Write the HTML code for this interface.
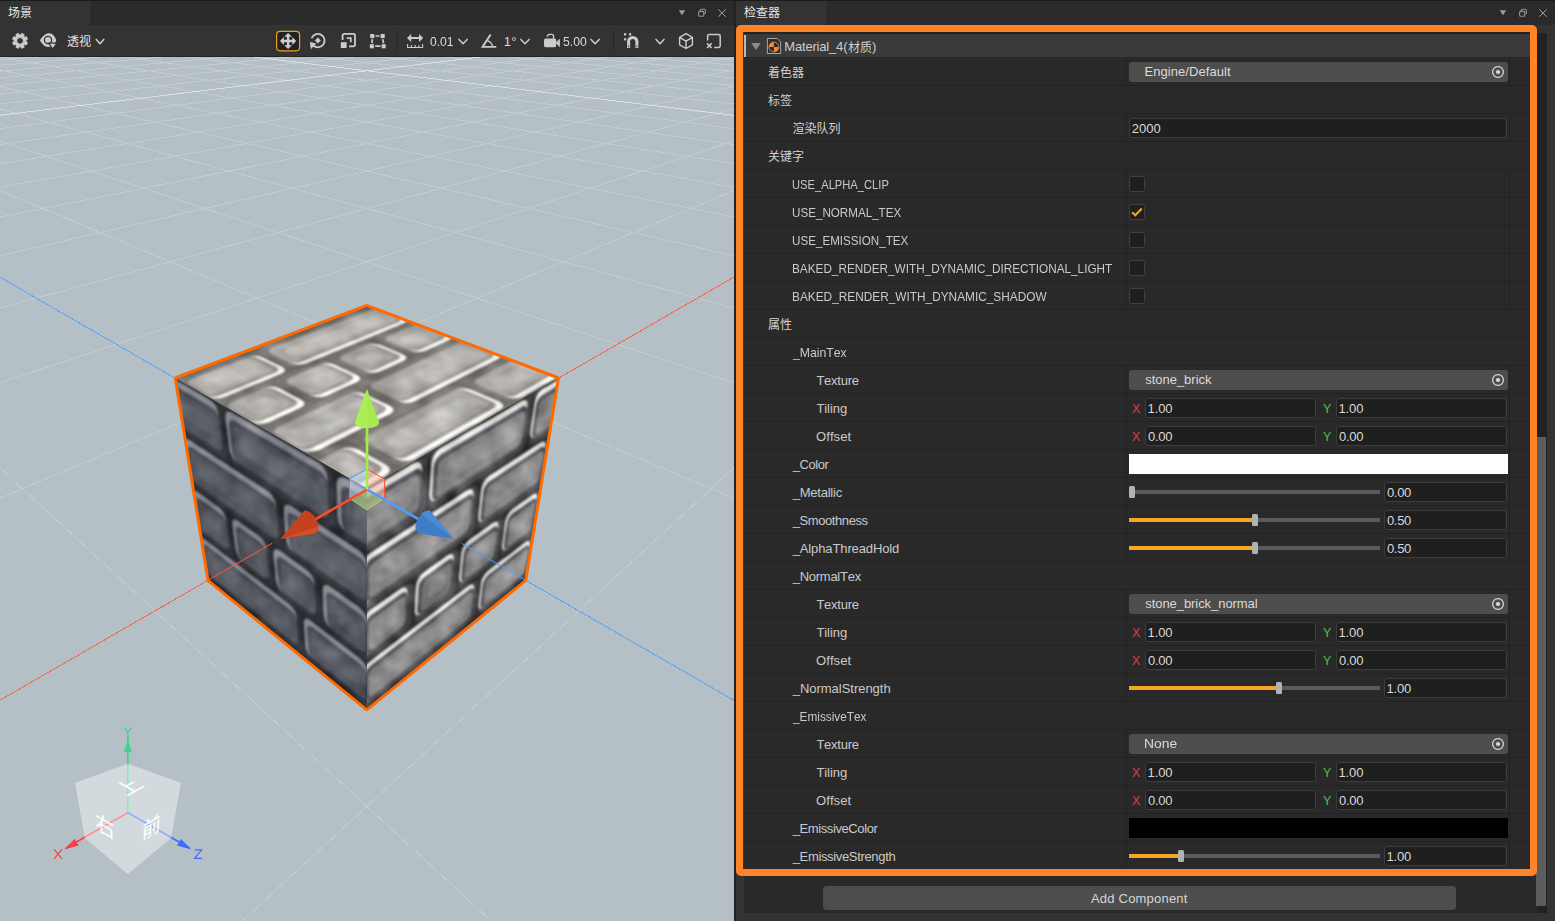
<!DOCTYPE html><html><head><meta charset="utf-8"><style>
html,body{margin:0;padding:0}
body{width:1555px;height:921px;overflow:hidden;position:relative;background:#333333;font-family:"Liberation Sans",sans-serif;font-kerning:none}
div{position:absolute;box-sizing:border-box}
.t{white-space:nowrap;font-size:13px}
.sep{left:744px;width:786px;height:1.3px;background:#222222}
.vs{width:1.3px;background:#222222}
.btn{background:#4d4d4d;border-radius:3px;height:20.5px}
.inp{background:#1f1f1f;border:1px solid #3d3d3d;border-radius:3px;height:19.5px}
.trk{height:3.4px;background:#5a5a5a;left:1129px;width:250.5px}
.fil{height:3.4px;background:#f5a623;left:1129px}
.thm{width:6px;height:11.4px;background:#b2b2b2;border-radius:1.5px}
.cb{left:1129.1px;width:15.9px;height:15.9px;background:#1f1f1f;border:1.1px solid #414141;border-radius:2.6px}
</style></head><body>
<div style="left:0;top:0;width:1555px;height:1px;background:#1a1a1a"></div>
<div style="left:0;top:1px;width:734px;height:23.6px;background:#2a2a2a"></div>
<div style="left:0;top:1px;width:90px;height:23.6px;background:#333"></div>
<div style="left:736px;top:1px;width:819px;height:23.6px;background:#2a2a2a"></div>
<div style="left:736px;top:1px;width:90px;height:23.6px;background:#333"></div>
<div style="left:734px;top:1px;width:2px;height:920px;background:#222"></div>
<div style="left:0;top:56px;width:734px;height:1px;background:#242424"></div>
<svg width="734" height="864" viewBox="0 57 734 864" style="position:absolute;left:0;top:57px;display:block">
<defs>
<filter id="soft" x="-5%" y="-5%" width="110%" height="110%"><feGaussianBlur stdDeviation="0.9"/></filter>
<filter id="stoneT" x="0" y="0" width="100%" height="100%" color-interpolation-filters="sRGB"><feGaussianBlur in="SourceGraphic" stdDeviation="1.25" result="b"/><feTurbulence type="fractalNoise" baseFrequency="0.035 0.06" numOctaves="2" seed="4" result="n"/><feColorMatrix in="n" type="matrix" values="0.6 0.6 0 0 0  0.6 0.6 0 0 0  0.6 0.6 0 0 0  0 0 0 0 1" result="ng"/><feComposite in="b" in2="ng" operator="arithmetic" k1="0" k2="1" k3="0.34" k4="-0.204"/></filter>
<filter id="stoneR" x="0" y="0" width="100%" height="100%" color-interpolation-filters="sRGB"><feGaussianBlur in="SourceGraphic" stdDeviation="1.15" result="b"/><feTurbulence type="fractalNoise" baseFrequency="0.05 0.05" numOctaves="2" seed="9" result="n"/><feColorMatrix in="n" type="matrix" values="0.6 0.6 0 0 0  0.6 0.6 0 0 0  0.6 0.6 0 0 0  0 0 0 0 1" result="ng"/><feComposite in="b" in2="ng" operator="arithmetic" k1="0" k2="1" k3="0.34" k4="-0.204"/></filter>
<filter id="stoneL" x="0" y="0" width="100%" height="100%" color-interpolation-filters="sRGB"><feGaussianBlur in="SourceGraphic" stdDeviation="1.3" result="b"/><feTurbulence type="fractalNoise" baseFrequency="0.05 0.05" numOctaves="2" seed="14" result="n"/><feColorMatrix in="n" type="matrix" values="0.6 0.6 0 0 0  0.6 0.6 0 0 0  0.6 0.6 0 0 0  0 0 0 0 1" result="ng"/><feComposite in="b" in2="ng" operator="arithmetic" k1="0" k2="1" k3="0.2" k4="-0.12"/></filter>
<linearGradient id="bgg" x1="0" y1="0" x2="0" y2="1"><stop offset="0" stop-color="#bfcad1"/><stop offset="0.06" stop-color="#b6c1c8"/><stop offset="1" stop-color="#b3bec5"/></linearGradient>
</defs>
<rect x="0" y="57" width="734" height="864" fill="#b4bfc6"/>
<path d="M359.5,-17.9L25585.4,610.9M374.2,-17.9L-24851.7,610.9M352.0,-17.7L32876.8,806.3M381.7,-17.7L-32143.1,806.3M344.3,-17.6L46419.5,1169.4M389.4,-17.6L-45685.8,1169.4M336.6,-17.4L80285.2,2077.4M397.1,-17.4L-79551.5,2077.4M328.7,-17.2L317701.5,8442.5M405.0,-17.2L-316967.8,8442.5M320.7,-17.0L400285.2,10832.3M413.0,-17.0L-399551.5,10832.3M312.5,-16.8L393211.6,10832.3M421.2,-16.8L-392477.9,10832.3M304.2,-16.6L386137.9,10832.3M429.4,-16.6L-385404.3,10832.3M295.8,-16.4L379064.3,10832.3M437.9,-16.4L-378330.6,10832.3M278.5,-15.9L364917.1,10832.3M455.2,-15.9L-364183.4,10832.3M269.6,-15.7L357843.4,10832.3M464.1,-15.7L-357109.8,10832.3M260.6,-15.5L350769.8,10832.3M473.1,-15.5L-350036.1,10832.3M251.4,-15.3L343696.2,10832.3M482.3,-15.3L-342962.5,10832.3M242.0,-15.0L336622.6,10832.3M491.7,-15.0L-335888.9,10832.3M232.5,-14.8L329549.0,10832.3M501.2,-14.8L-328815.3,10832.3M222.8,-14.6L322475.3,10832.3M510.9,-14.6L-321741.7,10832.3M212.9,-14.3L315401.7,10832.3M520.8,-14.3L-314668.0,10832.3M202.8,-14.1L308328.1,10832.3M530.9,-14.1L-307594.4,10832.3M182.0,-13.6L294180.8,10832.3M551.7,-13.6L-293447.2,10832.3M171.4,-13.3L287107.2,10832.3M562.3,-13.3L-286373.5,10832.3M160.5,-13.0L280033.6,10832.3M573.2,-13.0L-279299.9,10832.3M149.4,-12.8L272960.0,10832.3M584.3,-12.8L-272226.3,10832.3M138.1,-12.5L265886.4,10832.3M595.6,-12.5L-265152.7,10832.3M126.5,-12.2L258812.7,10832.3M607.2,-12.2L-258079.1,10832.3M114.7,-11.9L251739.1,10832.3M619.0,-11.9L-251005.4,10832.3M102.7,-11.6L244665.5,10832.3M631.0,-11.6L-243931.8,10832.3M90.4,-11.3L237591.9,10832.3M643.3,-11.3L-236858.2,10832.3M65.1,-10.7L223444.6,10832.3M668.6,-10.7L-222710.9,10832.3M52.0,-10.4L216371.0,10832.3M681.7,-10.4L-215637.3,10832.3M38.7,-10.1L209297.4,10832.3M695.0,-10.1L-208563.7,10832.3M25.0,-9.7L202223.8,10832.3M708.7,-9.7L-201490.1,10832.3M11.1,-9.4L195150.1,10832.3M722.6,-9.4L-194416.4,10832.3M-3.2,-9.0L188076.5,10832.3M736.9,-9.0L-187342.8,10832.3M-17.8,-8.7L181002.9,10832.3M751.4,-8.7L-180269.2,10832.3M-32.7,-8.3L173929.3,10832.3M766.4,-8.3L-173195.6,10832.3M-47.9,-7.9L166855.6,10832.3M781.6,-7.9L-166122.0,10832.3M-79.6,-7.2L152708.4,10832.3M813.2,-7.2L-151974.7,10832.3M-95.9,-6.8L145634.8,10832.3M829.6,-6.8L-144901.1,10832.3M-112.7,-6.3L138561.1,10832.3M846.4,-6.3L-137827.5,10832.3M-129.9,-5.9L131487.5,10832.3M863.6,-5.9L-130753.8,10832.3M-147.5,-5.5L124413.9,10832.3M881.2,-5.5L-123680.2,10832.3M-165.6,-5.1L117340.3,10832.3M899.2,-5.1L-116606.6,10832.3M-184.1,-4.6L110266.7,10832.3M917.8,-4.6L-109533.0,10832.3M-203.1,-4.1L103193.0,10832.3M936.8,-4.1L-102459.4,10832.3M-222.6,-3.7L96119.4,10832.3M956.3,-3.7L-95385.7,10832.3M-263.1,-2.7L81972.2,10832.3M996.8,-2.7L-81238.5,10832.3M-284.3,-2.1L74898.5,10832.3M1017.9,-2.1L-74164.9,10832.3M-305.9,-1.6L67824.9,10832.3M1039.6,-1.6L-67091.2,10832.3M-328.3,-1.1L60751.3,10832.3M1061.9,-1.1L-60017.6,10832.3M-351.2,-0.5L53677.7,10832.3M1084.9,-0.5L-52944.0,10832.3M-374.8,0.1L46604.1,10832.3M1108.5,0.1L-45870.4,10832.3M-399.1,0.7L39530.4,10832.3M1132.8,0.7L-38796.8,10832.3M-424.1,1.3L32456.8,10832.3M1157.8,1.3L-31723.1,10832.3M-449.9,1.9L25383.2,10832.3M1183.5,1.9L-24649.5,10832.3M-503.8,3.2L11235.9,10832.3M1237.5,3.2L-10502.3,10832.3M-532.0,3.9L4162.3,10832.3M1265.7,3.9L-3428.6,10832.3M-561.2,4.7L-2911.3,10832.3M1294.9,4.7L3645.0,10832.3M-591.3,5.4L-9984.9,10832.3M1325.0,5.4L10718.6,10832.3M-622.4,6.2L-17058.5,10832.3M1356.1,6.2L17792.2,10832.3M-654.5,6.9L-24132.2,10832.3M1388.2,6.9L24865.8,10832.3M-687.8,7.8L-31205.8,10832.3M1421.5,7.8L31939.5,10832.3M-722.2,8.6L-38279.4,10832.3M1455.9,8.6L39013.1,10832.3M-757.8,9.5L-45353.0,10832.3M1491.5,9.5L46086.7,10832.3M-833.0,11.3L-59500.3,10832.3M1566.7,11.3L60234.0,10832.3M-872.7,12.3L-66573.9,10832.3M1606.4,12.3L67307.6,10832.3M-914.0,13.3L-73647.5,10832.3M1647.7,13.3L74381.2,10832.3M-956.8,14.4L-80721.1,10832.3M1690.5,14.4L81454.8,10832.3M-1001.4,15.4L-87794.8,10832.3M1735.0,15.4L88528.4,10832.3M-1047.7,16.6L-94868.4,10832.3M1781.4,16.6L95602.1,10832.3M-1096.0,17.8L-101942.0,10832.3M1829.6,17.8L102675.7,10832.3M-1146.3,19.0L-109015.6,10832.3M1879.9,19.0L109749.3,10832.3M-1198.7,20.3L-116089.3,10832.3M1932.4,20.3L116822.9,10832.3M-1310.8,23.0L-130236.5,10832.3M2044.5,23.0L130970.2,10832.3M-1370.7,24.5L-137310.1,10832.3M2104.4,24.5L138043.8,10832.3M-1433.4,26.0L-144383.7,10832.3M2167.1,26.0L145117.4,10832.3M-1499.2,27.7L-151457.4,10832.3M2232.9,27.7L152191.0,10832.3M-1568.2,29.4L-158531.0,10832.3M2301.9,29.4L159264.7,10832.3M-1640.8,31.1L-165604.6,10832.3M2374.5,31.1L166338.3,10832.3M-1717.1,33.0L-172678.2,10832.3M2450.8,33.0L173411.9,10832.3M-1797.5,35.0L-179751.9,10832.3M2531.2,35.0L180485.5,10832.3M-1882.4,37.1L-186825.5,10832.3M2616.0,37.1L187559.2,10832.3M-2066.9,41.6L-200972.7,10832.3M2800.6,41.6L201706.4,10832.3M-2167.4,44.1L-208046.3,10832.3M2901.1,44.1L208780.0,10832.3M-2274.2,46.7L-215120.0,10832.3M3007.9,46.7L215853.7,10832.3M-2387.8,49.5L-222193.6,10832.3M3121.5,49.5L222927.3,10832.3M-2508.9,52.4L-229267.2,10832.3M3242.6,52.4L230000.9,10832.3M-2638.2,55.6L-236340.8,10832.3M3371.9,55.6L237074.5,10832.3M-2776.7,59.0L-243414.5,10832.3M3510.4,59.0L244148.1,10832.3M-2925.3,62.6L-250488.1,10832.3M3659.0,62.6L251221.8,10832.3M-3085.2,66.6L-257561.7,10832.3M3818.9,66.6L258295.4,10832.3M-3444.4,75.4L-271709.0,10832.3M4178.1,75.4L272442.6,10832.3M-3647.1,80.3L-278782.6,10832.3M4380.8,80.3L279516.3,10832.3M-3867.9,85.8L-285856.2,10832.3M4601.6,85.8L286589.9,10832.3M-4109.5,91.7L-292929.8,10832.3M4843.2,91.7L293663.5,10832.3M-4374.8,98.2L-300003.4,10832.3M5108.5,98.2L300737.1,10832.3M-4667.6,105.4L-307077.1,10832.3M5401.3,105.4L307810.7,10832.3M-4992.3,113.3L-314150.7,10832.3M5726.0,113.3L314884.4,10832.3M-5354.4,122.2L-321224.3,10832.3M6088.1,122.2L321958.0,10832.3M-5761.0,132.2L-328297.9,10832.3M6494.6,132.2L329031.6,10832.3M-6744.2,156.3L-342445.2,10832.3M7477.8,156.3L343178.9,10832.3M-7346.4,171.1L-349518.8,10832.3M8080.0,171.1L350252.5,10832.3M-8046.2,188.2L-356592.4,10832.3M8779.9,188.2L357326.1,10832.3M-8869.6,208.4L-363666.0,10832.3M9603.3,208.4L364399.7,10832.3M-9852.4,232.6L-370739.7,10832.3M10586.1,232.6L371473.3,10832.3M-11045.8,261.8L-377813.3,10832.3M11779.5,261.8L378547.0,10832.3M-12525.6,298.1L-384886.9,10832.3M13259.3,298.1L385620.6,10832.3M-14409.0,344.3L-391960.5,10832.3M15142.7,344.3L392694.2,10832.3M-16887.2,405.1L-399034.2,10832.3M17620.9,405.1L399767.8,10832.3" stroke="#fffff4" stroke-opacity="0.21" stroke-width="1" fill="none" shape-rendering="crispEdges"/>
<path d="M366.8,-18.1L21028.6,488.7M366.8,-18.1L-20294.9,488.7M287.2,-16.2L371990.7,10832.3M446.5,-16.2L-371257.0,10832.3M192.5,-13.8L301254.5,10832.3M541.2,-13.8L-300520.8,10832.3M77.9,-11.0L230518.2,10832.3M655.8,-11.0L-229784.6,10832.3M-63.6,-7.6L159782.0,10832.3M797.2,-7.6L-159048.3,10832.3M-242.6,-3.2L89045.8,10832.3M976.3,-3.2L-88312.1,10832.3M-794.7,10.4L-52426.7,10832.3M1528.4,10.4L53160.3,10832.3M-1253.5,21.6L-123162.9,10832.3M1987.2,21.6L123896.6,10832.3M-1972.0,39.3L-193899.1,10832.3M2705.7,39.3L194632.8,10832.3M-3257.7,70.8L-264635.3,10832.3M3991.4,70.8L265369.0,10832.3M-6220.5,143.5L-335371.6,10832.3M6954.2,143.5L336105.2,10832.3M-20294.9,488.7L-406107.8,10832.3M21028.6,488.7L406841.5,10832.3" stroke="#fffff8" stroke-opacity="0.5" stroke-width="1" fill="none" shape-rendering="crispEdges"/>
<path d="M1210.1,2.6L-17575.9,10832.3" stroke="#ff5a36" stroke-opacity="0.85" stroke-width="1" fill="none" shape-rendering="crispEdges"/>
<path d="M-476.4,2.6L18309.6,10832.3" stroke="#4d9dff" stroke-opacity="0.85" stroke-width="1" fill="none" shape-rendering="crispEdges"/>
<clipPath id="cT"><polygon points="556.8,378.9 366.8,488.4 176.9,378.9 366.8,307.0"/></clipPath>
<clipPath id="cR"><polygon points="366.8,488.4 556.8,378.9 524.3,579.7 366.8,708.0"/></clipPath>
<clipPath id="cL"><polygon points="176.9,378.9 366.8,488.4 366.8,708.0 209.4,579.7"/></clipPath>
<polygon points="366.8,307.0 556.8,378.9 524.3,579.7 366.8,708.0 209.4,579.7 176.9,378.9" fill="#6a6a6a" stroke="#ff6a00" stroke-width="6" stroke-linejoin="round"/>
<g clip-path="url(#cT)">
<g filter="url(#stoneT)">
<polygon points="575.8,378.9 366.8,502.5 157.9,378.9 366.8,301.2" fill="#6f6c68"/>
<polygon points="517.4,399.8 512.8,401.2 506.9,401.2 501.4,399.8 467.4,385.6 464.0,383.3 463.4,380.7 465.7,378.5 517.9,351.8 521.9,350.7 527.1,350.7 532.1,351.8 565.4,363.9 569.1,365.9 570.3,368.3 568.6,370.4" fill="#7a7773"/>
<polygon points="522.4,397.0 517.8,398.3 512.0,398.3 506.5,397.0 478.9,385.6 475.5,383.3 474.9,380.7 477.1,378.5 524.1,354.1 528.2,353.0 533.4,353.0 538.4,354.1 565.4,363.9 569.1,365.9 570.3,368.3 568.6,370.4" fill="#f6f6f3"/>
<polygon points="515.5,395.4 511.9,396.5 507.2,396.5 502.9,395.4 477.2,384.8 474.5,383.0 474.0,381.0 475.7,379.2 522.8,354.8 526.1,353.9 530.3,353.9 534.3,354.8 559.4,363.9 562.3,365.6 563.2,367.5 561.9,369.2" fill="#9b9893"/>
<polygon points="510.9,393.6 508.2,394.4 504.7,394.4 501.5,393.6 478.6,384.1 476.5,382.8 476.1,381.2 477.5,379.9 522.7,356.3 525.2,355.7 528.3,355.7 531.3,356.3 553.8,364.6 556.0,365.8 556.7,367.3 555.6,368.5" fill="#adaaa5"/>
<polygon points="511.5,387.8 508.2,388.8 503.9,388.8 499.9,387.8 494.4,385.6 491.8,383.9 491.2,381.9 492.8,380.2 526.2,362.5 529.3,361.6 533.3,361.6 537.2,362.5 542.6,364.5 545.3,366.1 546.1,367.9 544.7,369.4" fill="#bebbb6" opacity="0.8"/>
<polygon points="407.9,462.6 402.2,464.5 395.5,464.5 389.6,462.6 355.0,444.1 351.9,441.2 352.0,437.9 355.2,435.0 449.1,387.0 453.8,385.7 459.4,385.7 464.6,387.0 498.7,401.3 502.4,403.8 503.3,406.7 501.0,409.2" fill="#7a7773"/>
<polygon points="414.3,458.9 408.8,460.7 402.1,460.7 396.2,458.9 368.2,444.1 365.0,441.2 365.0,437.9 368.1,435.0 455.5,389.7 460.1,388.4 465.8,388.4 471.1,389.7 498.7,401.3 502.4,403.8 503.3,406.7 501.0,409.2" fill="#f6f6f3"/>
<polygon points="406.9,457.0 402.5,458.4 397.2,458.4 392.5,457.0 366.4,443.2 363.9,440.9 363.9,438.2 366.4,435.9 453.9,390.5 457.7,389.4 462.2,389.4 466.4,390.5 492.2,401.4 495.1,403.4 495.7,405.7 493.9,407.7" fill="#9b9893"/>
<polygon points="402.3,454.5 398.9,455.6 395.0,455.6 391.5,454.5 368.2,442.3 366.2,440.5 366.2,438.5 368.1,436.8 453.5,392.4 456.3,391.5 459.8,391.5 462.9,392.4 486.0,402.2 488.1,403.7 488.6,405.4 487.2,406.9" fill="#b0ada8"/>
<polygon points="404.6,447.0 400.5,448.3 395.6,448.3 391.3,447.0 385.7,444.1 383.2,441.9 383.1,439.4 385.4,437.3 456.2,399.7 459.8,398.6 464.1,398.6 468.1,399.7 473.7,402.1 476.4,403.9 476.9,406.1 475.1,408.0" fill="#bebbb6" opacity="0.8"/>
<polygon points="304.4,522.0 297.7,524.3 290.2,524.3 284.1,522.0 249.8,498.9 247.1,495.3 248.0,491.2 252.3,487.7 333.8,446.0 339.5,444.3 345.9,444.3 351.4,446.0 386.1,464.7 389.5,467.9 389.7,471.6 386.4,474.9" fill="#7a7773"/>
<polygon points="312.5,517.3 305.9,519.6 298.5,519.6 292.3,517.3 264.5,498.9 261.6,495.3 262.4,491.2 266.6,487.7 340.2,449.5 345.9,447.8 352.4,447.8 358.0,449.5 386.1,464.7 389.5,467.9 389.7,471.6 386.4,474.9" fill="#f6f6f3"/>
<polygon points="304.7,514.9 299.4,516.7 293.5,516.7 288.6,514.9 262.8,497.8 260.5,494.9 261.1,491.6 264.5,488.8 338.2,450.6 342.8,449.2 348.0,449.2 352.4,450.6 378.6,464.8 381.3,467.3 381.4,470.3 378.7,472.9" fill="#9b9893"/>
<polygon points="300.1,511.9 296.1,513.2 291.7,513.2 288.0,511.9 264.9,496.6 263.2,494.5 263.7,492.0 266.2,489.9 337.2,452.9 340.6,451.9 344.5,451.9 347.9,452.9 371.2,465.8 373.3,467.7 373.3,469.9 371.3,471.9" fill="#afaca7"/>
<polygon points="304.4,502.5 299.5,504.1 294.1,504.1 289.6,502.5 284.0,498.9 281.8,496.2 282.3,493.1 285.3,490.5 338.0,462.5 342.4,461.1 347.3,461.1 351.6,462.5 357.3,465.6 359.7,468.1 359.7,470.9 357.1,473.3" fill="#bebbb6" opacity="0.8"/>
<polygon points="409.1,404.2 404.1,405.6 398.2,405.6 393.0,404.2 362.2,389.6 359.4,387.3 359.4,384.7 362.2,382.4 452.4,341.1 456.5,340.1 461.6,340.1 466.2,341.1 496.6,352.5 499.9,354.4 500.6,356.7 498.6,358.7" fill="#7a7773"/>
<polygon points="414.9,401.2 409.9,402.7 404.0,402.7 398.8,401.2 373.9,389.6 371.0,387.3 371.0,384.7 373.7,382.4 458.1,343.3 462.2,342.2 467.3,342.2 472.0,343.3 496.6,352.5 499.9,354.4 500.6,356.7 498.6,358.7" fill="#f6f6f3"/>
<polygon points="408.3,399.7 404.4,400.8 399.7,400.8 395.5,399.7 372.3,388.9 370.0,387.1 370.0,385.0 372.2,383.1 456.7,343.9 460.0,343.1 464.1,343.1 467.9,343.9 490.8,352.6 493.4,354.1 493.9,355.9 492.3,357.5" fill="#9b9893"/>
<polygon points="404.2,397.8 401.2,398.6 397.7,398.6 394.6,397.8 373.8,388.2 372.1,386.8 372.1,385.2 373.8,383.9 456.4,345.4 458.9,344.7 461.9,344.7 464.7,345.4 485.3,353.2 487.2,354.3 487.6,355.7 486.4,356.9" fill="#b1aea9"/>
<polygon points="406.2,391.9 402.6,392.9 398.2,392.9 394.5,391.9 389.4,389.6 387.2,387.9 387.1,385.9 389.2,384.2 458.8,351.2 461.9,350.4 465.8,350.4 469.4,351.2 474.4,353.1 476.7,354.6 477.2,356.3 475.6,357.7" fill="#bebbb6" opacity="0.8"/>
<polygon points="312.0,453.5 306.1,455.2 299.6,455.2 294.1,453.5 263.6,435.6 261.0,432.8 261.8,429.6 265.5,426.8 343.4,391.1 348.4,389.7 354.1,389.7 359.0,391.1 389.9,405.7 393.0,408.2 393.2,411.2 390.3,413.7" fill="#7a7773"/>
<polygon points="319.1,449.9 313.3,451.6 306.8,451.6 301.3,449.9 276.5,435.6 273.9,432.8 274.5,429.6 278.2,426.8 349.1,393.9 354.2,392.5 359.9,392.5 364.9,393.9 389.9,405.7 393.0,408.2 393.2,411.2 390.3,413.7" fill="#f6f6f3"/>
<polygon points="312.2,448.0 307.5,449.4 302.4,449.4 298.0,448.0 275.0,434.7 272.9,432.4 273.4,429.9 276.3,427.7 347.4,394.7 351.4,393.6 356.0,393.6 360.0,394.7 383.3,405.8 385.7,407.8 385.8,410.1 383.5,412.2" fill="#9b9893"/>
<polygon points="308.1,445.6 304.6,446.7 300.7,446.7 297.5,445.6 276.8,433.8 275.3,432.1 275.7,430.2 277.8,428.5 346.5,396.6 349.5,395.7 353.0,395.7 356.0,396.6 376.8,406.6 378.6,408.1 378.7,409.8 376.9,411.4" fill="#b1aea9"/>
<polygon points="311.8,438.4 307.5,439.6 302.7,439.6 298.7,438.4 293.8,435.6 291.7,433.5 292.1,431.0 294.8,429.0 347.4,404.0 351.2,403.0 355.6,403.0 359.4,404.0 364.5,406.5 366.7,408.4 366.7,410.6 364.4,412.5" fill="#bebbb6" opacity="0.8"/>
<polygon points="420.3,353.2 415.9,354.3 410.7,354.3 406.1,353.2 378.3,341.8 375.7,339.9 375.6,337.9 378.1,336.1 407.3,324.0 411.3,323.0 416.2,323.0 420.5,324.0 448.2,334.3 451.0,336.1 451.5,338.2 449.4,340.0" fill="#7a7773"/>
<polygon points="425.3,350.9 421.0,352.0 415.8,352.0 411.2,350.9 388.7,341.8 386.0,339.9 385.9,337.9 388.3,336.1 412.5,325.9 416.6,325.0 421.4,325.0 425.8,325.9 448.2,334.3 451.0,336.1 451.5,338.2 449.4,340.0" fill="#f6f6f3"/>
<polygon points="419.5,349.7 416.0,350.6 411.9,350.6 408.2,349.7 387.2,341.2 385.1,339.7 385.1,338.1 387.0,336.6 411.1,326.5 414.4,325.7 418.2,325.7 421.7,326.5 442.6,334.4 444.9,335.8 445.2,337.4 443.5,338.9" fill="#9b9893"/>
<polygon points="415.8,348.2 413.2,348.9 410.1,348.9 407.3,348.2 388.6,340.6 387.0,339.5 386.9,338.3 388.4,337.2 410.6,327.9 413.0,327.3 416.0,327.3 418.6,327.9 437.3,334.9 439.0,336.0 439.2,337.2 437.9,338.3" fill="#aca9a4"/>
<polygon points="417.5,343.6 414.2,344.4 410.4,344.4 407.0,343.6 402.5,341.8 400.5,340.4 400.3,338.8 402.1,337.5 412.2,333.1 415.3,332.4 419.1,332.4 422.4,333.1 426.9,334.9 429.0,336.2 429.2,337.7 427.6,339.1" fill="#bebbb6" opacity="0.8"/>
<polygon points="375.3,373.7 370.5,375.0 365.0,375.0 360.3,373.7 332.5,361.1 330.0,359.1 330.2,356.8 333.0,354.8 361.6,342.9 366.0,341.9 371.1,341.9 375.5,342.9 403.3,354.4 406.1,356.4 406.4,358.7 403.9,360.7" fill="#7a7773"/>
<polygon points="380.8,371.2 376.1,372.4 370.6,372.4 365.9,371.2 343.4,361.1 340.8,359.1 341.0,356.8 343.7,354.8 366.8,345.1 371.3,344.0 376.4,344.0 380.8,345.1 403.3,354.4 406.1,356.4 406.4,358.7 403.9,360.7" fill="#f6f6f3"/>
<polygon points="374.8,369.9 371.1,370.8 366.7,370.8 362.9,369.9 342.0,360.4 339.9,358.8 340.1,357.0 342.3,355.4 365.3,345.8 368.8,344.9 372.9,344.9 376.5,345.8 397.5,354.5 399.7,356.1 399.8,357.9 397.9,359.5" fill="#9b9893"/>
<polygon points="371.1,368.2 368.3,368.9 365.0,368.9 362.2,368.2 343.5,359.8 341.9,358.6 342.0,357.2 343.7,356.0 364.6,347.2 367.3,346.6 370.3,346.6 373.0,347.2 391.8,355.1 393.4,356.3 393.5,357.6 392.0,358.8" fill="#aba8a3"/>
<polygon points="373.4,363.1 370.0,364.0 365.9,364.0 362.5,363.1 357.9,361.1 356.0,359.6 356.0,357.8 358.0,356.4 365.6,353.1 369.0,352.3 372.9,352.3 376.3,353.1 380.8,355.0 382.9,356.5 382.9,358.2 381.0,359.7" fill="#bebbb6" opacity="0.8"/>
<polygon points="321.1,398.4 315.9,399.8 310.1,399.8 305.2,398.4 277.6,384.2 275.3,382.0 275.8,379.4 279.1,377.2 314.8,362.3 319.6,361.2 324.9,361.2 329.4,362.3 357.2,375.1 360.0,377.2 359.9,379.8 357.1,382.0" fill="#7a7773"/>
<polygon points="327.3,395.5 322.2,396.9 316.4,396.9 311.5,395.5 289.1,384.2 286.7,382.0 287.2,379.4 290.4,377.2 320.0,364.8 324.8,363.6 330.2,363.6 334.7,364.8 357.2,375.1 360.0,377.2 359.9,379.8 357.1,382.0" fill="#f6f6f3"/>
<polygon points="321.2,394.0 317.1,395.1 312.4,395.1 308.6,394.0 287.7,383.5 285.8,381.7 286.2,379.7 288.8,377.9 318.3,365.5 322.2,364.5 326.5,364.5 330.1,365.5 351.1,375.1 353.2,376.9 353.1,378.9 350.9,380.7" fill="#9b9893"/>
<polygon points="317.5,392.2 314.4,393.0 310.9,393.0 308.1,392.2 289.4,382.8 288.0,381.5 288.2,379.9 290.2,378.6 317.4,367.1 320.3,366.4 323.5,366.4 326.3,367.1 345.0,375.8 346.6,377.1 346.5,378.6 344.8,380.0" fill="#b3b0ab"/>
<polygon points="320.6,386.4 316.8,387.4 312.6,387.4 309.0,386.4 304.5,384.2 302.7,382.5 303.0,380.6 305.3,378.9 317.7,373.6 321.4,372.7 325.5,372.7 329.0,373.6 333.5,375.7 335.5,377.4 335.3,379.3 333.1,380.9" fill="#bebbb6" opacity="0.8"/>
<polygon points="262.5,425.1 256.8,426.7 250.6,426.7 245.6,425.1 218.4,409.2 216.3,406.7 217.2,403.8 221.0,401.3 258.8,385.6 264.0,384.3 269.6,384.3 274.2,385.6 301.8,399.9 304.4,402.3 304.0,405.2 300.7,407.7" fill="#7a7773"/>
<polygon points="269.5,421.9 263.8,423.5 257.7,423.5 252.7,421.9 230.6,409.2 228.4,406.7 229.3,403.8 233.0,401.3 263.9,388.3 269.1,387.0 274.8,387.0 279.4,388.3 301.8,399.9 304.4,402.3 304.0,405.2 300.7,407.7" fill="#f6f6f3"/>
<polygon points="263.1,420.2 258.6,421.5 253.7,421.5 249.8,420.2 229.2,408.4 227.5,406.4 228.2,404.1 231.1,402.1 262.0,389.1 266.2,388.1 270.7,388.1 274.5,389.1 295.3,400.0 297.3,401.9 296.9,404.2 294.3,406.2" fill="#9b9893"/>
<polygon points="259.5,418.1 256.1,419.0 252.4,419.0 249.5,418.1 231.1,407.6 229.8,406.1 230.3,404.4 232.5,402.9 260.8,391.0 263.9,390.2 267.4,390.2 270.2,391.0 288.7,400.7 290.3,402.2 290.0,403.9 287.9,405.4" fill="#aeaba6"/>
<polygon points="263.6,411.7 259.5,412.8 255.0,412.8 251.3,411.7 246.9,409.2 245.2,407.3 245.8,405.1 248.5,403.3 260.2,398.3 264.2,397.2 268.6,397.2 272.1,398.3 276.6,400.6 278.4,402.5 278.0,404.6 275.4,406.5" fill="#bebbb6" opacity="0.8"/>
<polygon points="300.6,365.8 295.7,367.0 290.3,367.0 285.9,365.8 260.8,353.7 258.7,351.7 259.3,349.5 262.4,347.6 366.1,308.3 370.0,307.4 374.7,307.4 378.7,308.3 404.0,317.8 406.6,319.4 406.8,321.3 404.5,322.9" fill="#7a7773"/>
<polygon points="306.5,363.4 301.7,364.6 296.3,364.6 291.8,363.4 271.5,353.7 269.4,351.7 269.9,349.5 273.0,347.6 370.8,310.1 374.8,309.2 379.5,309.2 383.5,310.1 404.0,317.8 406.6,319.4 406.8,321.3 404.5,322.9" fill="#f6f6f3"/>
<polygon points="300.8,362.1 297.0,363.0 292.7,363.0 289.2,362.1 270.2,353.0 268.5,351.5 269.0,349.7 271.4,348.2 369.4,310.6 372.6,309.9 376.3,309.9 379.6,310.6 398.7,317.8 400.7,319.1 400.8,320.6 399.0,321.9" fill="#9b9893"/>
<polygon points="297.5,360.5 294.6,361.2 291.4,361.2 288.7,360.5 271.8,352.4 270.5,351.3 270.9,349.9 272.7,348.8 368.8,311.8 371.2,311.3 374.0,311.3 376.4,311.8 393.5,318.3 395.0,319.3 395.1,320.4 393.8,321.4" fill="#adaaa5"/>
<polygon points="300.7,355.6 297.1,356.4 293.1,356.4 289.9,355.6 285.8,353.7 284.1,352.2 284.5,350.5 286.7,349.1 369.8,316.7 372.8,316.0 376.4,316.0 379.5,316.7 383.6,318.3 385.5,319.5 385.5,320.9 383.8,322.1" fill="#bebbb6" opacity="0.8"/>
<polygon points="218.3,399.8 212.7,401.2 206.9,401.2 202.3,399.8 177.9,385.6 176.1,383.3 177.3,380.7 181.1,378.5 243.3,354.9 248.2,353.8 253.4,353.8 257.6,354.9 282.7,367.1 284.9,369.2 284.5,371.7 281.3,373.8" fill="#7a7773"/>
<polygon points="225.2,397.0 219.7,398.3 213.9,398.3 209.3,397.0 189.5,385.6 187.7,383.3 188.7,380.7 192.5,378.5 248.0,357.2 252.9,356.1 258.1,356.1 262.4,357.2 282.7,367.1 284.9,369.2 284.5,371.7 281.3,373.8" fill="#f6f6f3"/>
<polygon points="219.4,395.4 215.0,396.5 210.3,396.5 206.7,395.4 188.3,384.8 186.8,383.0 187.7,381.0 190.6,379.2 246.2,357.9 250.1,357.0 254.3,357.0 257.7,357.9 276.6,367.2 278.4,368.9 278.0,370.8 275.4,372.5" fill="#9b9893"/>
<polygon points="216.1,393.6 212.8,394.4 209.3,394.4 206.6,393.6 190.1,384.1 189.0,382.8 189.6,381.2 191.9,379.9 245.0,359.5 247.9,358.8 251.1,358.8 253.7,359.5 270.5,367.9 271.9,369.1 271.5,370.6 269.6,371.8" fill="#b5b2ad"/>
<polygon points="220.6,387.8 216.6,388.8 212.3,388.8 209.0,387.8 205.0,385.6 203.5,383.9 204.2,381.9 207.0,380.2 244.2,365.7 247.9,364.8 252.0,364.8 255.2,365.7 259.3,367.8 260.9,369.3 260.4,371.2 258.0,372.8" fill="#bebbb6" opacity="0.8"/>
</g></g>
<g clip-path="url(#cR)">
<g filter="url(#stoneR)">
<polygon points="354.5,481.2 566.3,362.5 529.4,582.6 357.3,724.5" fill="#343435"/>
<polygon points="420.2,459.7 424.3,458.7 427.2,460.8 428.0,465.4 425.8,504.1 424.5,509.6 421.4,515.0 417.3,518.9 345.6,565.1 340.9,566.8 337.2,565.4 335.8,561.2 334.5,520.6 335.7,514.3 339.3,508.0 344.3,503.6" fill="#4a4a4c"/>
<polygon points="414.2,463.2 418.4,462.1 421.3,464.2 422.2,468.8 420.6,500.8 419.2,506.4 416.1,511.9 411.9,515.8 345.5,558.1 340.7,559.8 337.0,558.3 335.6,554.0 334.5,520.6 335.7,514.3 339.3,508.0 344.3,503.6" fill="#e2e2df"/>
<polygon points="415.6,469.4 418.9,468.5 421.3,470.1 421.9,473.8 420.5,502.8 419.4,507.2 416.9,511.6 413.6,514.7 346.8,557.3 343.0,558.6 340.1,557.4 338.9,554.0 338.1,523.8 339.0,518.8 341.9,513.8 345.8,510.3" fill="#56585f"/>
<polygon points="415.2,475.3 417.7,474.6 419.4,475.8 419.9,478.5 418.7,503.7 417.9,507.1 416.0,510.3 413.5,512.7 350.1,553.0 347.2,554.0 345.1,553.1 344.2,550.5 343.6,524.3 344.4,520.6 346.5,516.9 349.4,514.3" fill="#868585"/>
<polygon points="407.0,486.5 410.1,485.6 412.4,487.1 413.0,490.4 412.8,496.0 411.8,500.2 409.4,504.4 406.2,507.4 359.6,536.4 356.1,537.6 353.5,536.4 352.5,533.1 352.4,527.3 353.3,522.8 355.9,518.2 359.5,515.0" fill="#979695" opacity="0.7"/>
<polygon points="527.0,397.9 530.1,397.3 531.9,399.6 532.1,403.9 526.9,440.0 525.4,445.1 522.7,449.8 519.4,453.0 436.2,506.7 432.4,507.9 429.8,506.2 429.0,502.1 431.3,463.5 432.7,457.6 435.9,452.0 440.1,448.2" fill="#4a4a4c"/>
<polygon points="522.5,400.6 525.6,400.0 527.4,402.2 527.6,406.6 523.4,436.4 521.9,441.5 519.2,446.3 515.8,449.5 436.6,500.0 432.8,501.2 430.2,499.5 429.4,495.3 431.3,463.5 432.7,457.6 435.9,452.0 440.1,448.2" fill="#e2e2df"/>
<polygon points="522.9,406.5 525.3,406.0 526.8,407.7 527.0,411.2 523.2,438.2 522.0,442.3 519.8,446.1 517.1,448.7 437.7,499.3 434.7,500.3 432.6,498.9 432.0,495.6 433.7,466.7 434.9,462.1 437.4,457.7 440.7,454.6" fill="#56585f"/>
<polygon points="522.0,411.9 523.8,411.5 525.0,412.8 525.1,415.4 521.8,438.9 520.9,442.0 519.3,444.9 517.3,446.8 440.5,495.5 438.3,496.2 436.7,495.2 436.3,492.6 437.9,467.7 438.8,464.2 440.7,460.9 443.1,458.7" fill="#878686"/>
<polygon points="515.1,421.6 517.4,421.1 518.9,422.6 519.0,425.8 518.3,431.0 517.2,434.9 515.1,438.6 512.5,441.1 449.2,480.6 446.4,481.4 444.5,480.0 444.0,476.8 444.4,471.3 445.4,467.0 447.8,463.0 450.8,460.2" fill="#979695" opacity="0.7"/>
<polygon points="590.5,361.2 593.0,360.9 594.3,363.1 594.1,367.3 587.6,401.6 586.0,406.3 583.5,410.7 580.6,413.5 534.1,443.5 531.3,444.3 529.5,442.4 529.4,438.5 534.6,402.4 536.2,397.1 539.0,392.2 542.4,389.0" fill="#4a4a4c"/>
<polygon points="586.6,363.4 589.1,363.1 590.5,365.3 590.4,369.5 585.0,397.8 583.5,402.6 580.9,407.0 578.0,409.9 535.1,437.3 532.2,438.0 530.5,436.1 530.3,432.1 534.6,402.4 536.2,397.1 539.0,392.2 542.4,389.0" fill="#e2e2df"/>
<polygon points="586.6,369.1 588.6,368.8 589.6,370.6 589.5,373.9 584.7,399.6 583.5,403.4 581.4,406.9 579.1,409.2 535.9,436.7 533.6,437.3 532.2,435.8 532.1,432.6 536.1,405.7 537.3,401.5 539.6,397.6 542.2,395.1" fill="#56585f"/>
<polygon points="585.5,374.2 587.0,374.0 587.8,375.3 587.7,377.8 583.5,400.1 582.6,403.0 581.1,405.7 579.4,407.4 538.3,433.4 536.6,433.9 535.6,432.7 535.5,430.3 539.0,407.0 539.9,403.9 541.6,401.0 543.6,399.1" fill="#888787"/>
<polygon points="579.3,383.0 581.2,382.7 582.3,384.3 582.2,387.4 581.3,392.3 580.1,396.0 578.2,399.3 576.0,401.5 546.0,420.2 543.9,420.7 542.6,419.2 542.5,416.1 543.3,411.0 544.5,407.2 546.6,403.6 549.0,401.3" fill="#979695" opacity="0.7"/>
<polygon points="472.5,486.7 475.9,485.7 478.1,487.4 478.5,491.3 475.0,524.8 473.6,529.7 470.9,534.5 467.4,537.9 369.6,607.2 365.3,609.0 362.2,608.0 361.0,604.4 360.8,568.9 362.0,563.3 365.3,557.6 369.7,553.4" fill="#4a4a4c"/>
<polygon points="467.5,489.9 471.0,488.9 473.2,490.6 473.7,494.5 470.9,522.2 469.5,527.1 466.8,531.9 463.2,535.4 369.6,601.0 365.3,602.9 362.2,601.8 361.0,598.1 360.8,568.9 362.0,563.3 365.3,557.6 369.7,553.4" fill="#e2e2df"/>
<polygon points="468.4,495.2 471.1,494.3 472.9,495.6 473.2,498.7 470.7,523.9 469.6,527.8 467.4,531.7 464.6,534.5 370.8,600.2 367.4,601.7 364.9,600.8 363.9,597.9 363.8,571.4 364.8,567.0 367.4,562.5 370.9,559.1" fill="#56585f"/>
<polygon points="467.8,500.3 469.8,499.6 471.1,500.6 471.4,502.9 469.2,524.7 468.4,527.7 466.8,530.6 464.6,532.7 373.7,596.2 371.2,597.3 369.3,596.6 368.7,594.4 368.7,571.5 369.4,568.2 371.4,564.8 374.0,562.3" fill="#898888"/>
<polygon points="460.7,510.3 463.2,509.4 464.9,510.6 465.3,513.4 464.9,518.2 463.9,522.0 461.7,525.7 459.0,528.3 382.5,581.0 379.4,582.3 377.1,581.4 376.3,578.6 376.3,573.5 377.2,569.5 379.6,565.4 382.8,562.3" fill="#979695" opacity="0.7"/>
<polygon points="545.3,439.5 548.0,438.8 549.6,440.6 549.7,444.4 544.4,476.4 543.0,481.0 540.4,485.3 537.5,488.4 483.3,526.7 480.1,527.9 478.1,526.6 477.6,523.0 481.2,489.5 482.6,484.4 485.5,479.4 489.0,476.0" fill="#4a4a4c"/>
<polygon points="541.2,442.1 543.9,441.4 545.6,443.2 545.6,447.0 541.4,473.4 539.9,478.1 537.4,482.5 534.4,485.6 483.9,520.9 480.8,522.1 478.7,520.7 478.3,517.1 481.2,489.5 482.6,484.4 485.5,479.4 489.0,476.0" fill="#e2e2df"/>
<polygon points="541.4,447.3 543.6,446.7 544.9,448.1 545.0,451.1 541.1,475.1 540.0,478.8 537.9,482.3 535.5,484.8 484.8,520.3 482.3,521.2 480.7,520.1 480.3,517.2 483.1,492.2 484.2,488.2 486.5,484.2 489.3,481.5" fill="#56585f"/>
<polygon points="540.6,452.1 542.2,451.6 543.2,452.7 543.2,454.9 539.9,475.8 539.0,478.5 537.5,481.2 535.7,483.0 487.3,516.9 485.4,517.5 484.2,516.7 484.0,514.5 486.4,492.9 487.3,489.8 488.9,486.9 491.0,484.9" fill="#878686"/>
<polygon points="534.3,461.1 536.4,460.5 537.6,461.7 537.7,464.5 537.0,469.1 535.9,472.6 533.9,476.0 531.6,478.3 495.0,503.6 492.7,504.4 491.2,503.2 490.9,500.5 491.5,495.7 492.5,492.0 494.6,488.4 497.2,485.9" fill="#979695" opacity="0.7"/>
<polygon points="405.7,584.9 409.5,583.3 412.2,584.4 413.0,587.9 411.5,618.9 410.4,623.6 407.6,628.5 403.8,632.3 369.4,658.6 365.4,660.6 362.5,660.0 361.3,656.8 361.1,625.3 362.3,620.2 365.4,614.8 369.6,610.6" fill="#4a4a4c"/>
<polygon points="400.3,588.8 404.1,587.2 406.8,588.2 407.7,591.7 406.6,617.3 405.4,622.0 402.6,627.0 398.8,630.8 369.5,653.1 365.4,655.1 362.4,654.4 361.3,651.3 361.1,625.3 362.3,620.2 365.4,614.8 369.6,610.6" fill="#e2e2df"/>
<polygon points="401.6,593.4 404.7,592.1 406.8,592.9 407.5,595.7 406.5,618.9 405.6,622.7 403.3,626.6 400.3,629.7 370.6,652.2 367.3,653.8 365.0,653.3 364.1,650.8 364.0,627.2 364.9,623.2 367.4,618.9 370.7,615.6" fill="#56585f"/>
<polygon points="401.3,598.1 403.6,597.1 405.2,597.7 405.7,599.8 404.9,620.0 404.2,622.8 402.5,625.8 400.2,628.1 373.4,648.4 371.0,649.6 369.2,649.2 368.6,647.3 368.6,626.8 369.3,623.8 371.1,620.6 373.6,618.2" fill="#898888"/>
<polygon points="393.9,608.6 396.8,607.3 398.8,608.0 399.5,610.5 399.4,615.0 398.5,618.6 396.3,622.3 393.4,625.3 381.7,634.0 378.7,635.4 376.6,634.9 375.8,632.4 375.8,627.9 376.7,624.2 378.9,620.3 382.0,617.3" fill="#979695" opacity="0.7"/>
<polygon points="452.6,551.6 455.9,550.3 458.2,551.5 458.7,554.9 455.9,585.5 454.7,589.9 452.0,594.6 448.6,598.1 421.2,619.0 417.7,620.7 415.2,619.9 414.5,616.7 416.0,585.7 417.3,580.8 420.2,575.7 424.0,571.9" fill="#4a4a4c"/>
<polygon points="447.7,555.1 451.1,553.7 453.4,554.9 453.9,558.4 451.7,583.5 450.5,588.1 447.8,592.8 444.3,596.4 421.5,613.6 418.0,615.3 415.5,614.4 414.7,611.2 416.0,585.7 417.3,580.8 420.2,575.7 424.0,571.9" fill="#e2e2df"/>
<polygon points="448.6,559.7 451.3,558.6 453.1,559.5 453.6,562.3 451.6,585.1 450.6,588.7 448.4,592.5 445.7,595.3 422.5,612.9 419.7,614.2 417.7,613.5 417.1,611.0 418.4,587.8 419.3,583.9 421.6,579.9 424.7,576.9" fill="#56585f"/>
<polygon points="448.1,564.3 450.1,563.5 451.5,564.2 451.8,566.2 450.1,586.1 449.4,588.8 447.8,591.6 445.7,593.7 425.1,609.3 423.0,610.3 421.5,609.7 421.1,607.8 422.3,587.7 423.0,584.8 424.7,581.9 427.0,579.6" fill="#807f7f"/>
<polygon points="441.2,574.1 443.8,573.0 445.5,573.9 445.9,576.4 445.6,580.7 444.7,584.2 442.6,587.8 440.0,590.5 433.0,595.7 430.4,596.9 428.6,596.2 428.0,593.7 428.3,589.3 429.2,585.8 431.4,582.1 434.1,579.3" fill="#979695" opacity="0.7"/>
<polygon points="497.8,519.4 500.7,518.3 502.6,519.7 502.9,523.1 498.9,552.9 497.7,557.3 495.1,561.7 492.0,565.0 464.3,586.1 461.2,587.6 459.0,586.6 458.5,583.5 461.4,553.0 462.7,548.2 465.5,543.5 468.9,540.0" fill="#4a4a4c"/>
<polygon points="493.4,522.5 496.4,521.4 498.3,522.8 498.6,526.2 495.4,550.8 494.2,555.2 491.6,559.6 488.4,562.9 464.8,580.8 461.7,582.3 459.6,581.3 459.0,578.1 461.4,553.0 462.7,548.2 465.5,543.5 468.9,540.0" fill="#e2e2df"/>
<polygon points="494.0,527.1 496.4,526.2 497.9,527.3 498.1,530.0 495.3,552.3 494.2,555.8 492.2,559.4 489.7,562.0 465.7,580.2 463.2,581.3 461.5,580.5 461.1,577.9 463.3,555.2 464.3,551.4 466.5,547.6 469.3,544.9" fill="#56585f"/>
<polygon points="493.3,531.6 495.1,530.9 496.2,531.7 496.4,533.7 493.9,553.2 493.2,555.8 491.6,558.5 489.7,560.4 468.1,576.8 466.2,577.6 465.0,577.0 464.7,575.1 466.7,555.4 467.5,552.6 469.1,549.7 471.1,547.7" fill="#858484"/>
<polygon points="486.9,540.8 489.1,539.9 490.6,540.8 490.9,543.3 490.3,547.6 489.3,551.0 487.4,554.4 485.0,556.9 475.6,563.9 473.3,564.9 471.7,564.1 471.4,561.6 471.8,557.3 472.8,553.9 474.8,550.4 477.3,547.8" fill="#979695" opacity="0.7"/>
<polygon points="536.9,491.6 539.6,490.6 541.1,492.1 541.2,495.5 536.4,524.7 535.1,528.9 532.7,533.1 529.8,536.1 506.1,554.2 503.4,555.4 501.6,554.3 501.3,551.2 505.3,521.3 506.7,516.8 509.3,512.2 512.4,509.0" fill="#4a4a4c"/>
<polygon points="533.0,494.4 535.6,493.4 537.2,494.9 537.3,498.3 533.5,522.3 532.1,526.6 529.7,530.8 526.8,533.9 506.9,549.0 504.1,550.2 502.3,549.1 502.0,545.9 505.3,521.3 506.7,516.8 509.3,512.2 512.4,509.0" fill="#e2e2df"/>
<polygon points="533.3,498.9 535.4,498.2 536.7,499.3 536.8,502.0 533.2,523.8 532.2,527.2 530.2,530.6 527.9,533.0 507.7,548.4 505.4,549.3 504.0,548.4 503.8,545.9 506.8,523.6 507.9,520.0 510.0,516.4 512.5,513.8" fill="#56585f"/>
<polygon points="532.5,503.3 534.1,502.7 535.0,503.6 535.1,505.6 532.0,524.6 531.2,527.1 529.8,529.7 528.0,531.5 509.9,545.2 508.3,545.9 507.2,545.2 507.1,543.3 509.7,524.0 510.5,521.3 512.1,518.6 514.0,516.7" fill="#898888"/>
<polygon points="526.5,512.0 528.5,511.2 529.7,512.2 529.8,514.7 529.1,518.9 528.1,522.2 526.3,525.4 524.1,527.7 517.0,533.0 514.9,533.8 513.7,532.9 513.5,530.5 514.1,526.2 515.1,522.9 517.0,519.6 519.3,517.2" fill="#979695" opacity="0.7"/>
<polygon points="473.3,582.0 476.3,580.6 478.3,581.6 478.7,584.6 475.5,612.0 474.3,616.1 471.8,620.4 468.7,623.7 369.3,704.6 365.5,706.8 362.7,706.5 361.6,703.8 361.5,675.5 362.5,670.8 365.4,665.8 369.4,661.7" fill="#4a4a4c"/>
<polygon points="468.9,585.4 471.9,583.9 473.9,584.9 474.3,587.9 471.8,610.5 470.6,614.7 468.1,619.0 465.0,622.4 369.3,699.7 365.5,701.9 362.7,701.5 361.6,698.8 361.5,675.5 362.5,670.8 365.4,665.8 369.4,661.7" fill="#e2e2df"/>
<polygon points="469.6,589.4 472.0,588.3 473.6,589.0 474.0,591.4 471.7,611.9 470.7,615.2 468.7,618.7 466.2,621.4 370.4,698.9 367.3,700.6 365.1,700.3 364.2,698.1 364.2,677.0 365.0,673.3 367.3,669.3 370.5,666.0" fill="#56585f"/>
<polygon points="469.1,593.6 470.9,592.7 472.1,593.2 472.3,595.0 470.4,612.8 469.6,615.3 468.1,617.9 466.3,620.0 373.0,695.2 370.8,696.4 369.1,696.2 368.5,694.6 368.5,676.2 369.1,673.5 370.9,670.5 373.2,668.0" fill="#868585"/>
<polygon points="462.8,602.7 465.0,601.6 466.5,602.2 466.9,604.4 466.5,608.3 465.6,611.5 463.7,614.8 461.3,617.4 380.9,681.5 378.1,683.1 376.0,682.7 375.3,680.6 375.3,676.6 376.1,673.2 378.3,669.5 381.2,666.5" fill="#979695" opacity="0.7"/>
<polygon points="529.3,539.0 531.9,537.9 533.4,539.0 533.5,542.1 529.1,568.8 527.9,572.7 525.6,576.7 522.8,579.7 482.9,612.2 480.1,613.6 478.3,612.9 477.9,610.1 481.1,582.7 482.3,578.4 484.9,574.0 488.0,570.7" fill="#4a4a4c"/>
<polygon points="525.5,541.9 528.1,540.8 529.7,541.9 529.8,545.0 526.2,567.0 525.0,570.9 522.6,575.0 519.9,578.0 483.5,607.4 480.7,608.9 478.8,608.1 478.4,605.2 481.1,582.7 482.3,578.4 484.9,574.0 488.0,570.7" fill="#e2e2df"/>
<polygon points="525.8,546.0 527.9,545.1 529.1,545.9 529.2,548.3 526.0,568.3 525.0,571.5 523.1,574.7 520.9,577.2 484.3,606.8 482.1,607.9 480.6,607.3 480.3,605.0 482.7,584.6 483.7,581.2 485.7,577.7 488.2,575.0" fill="#56585f"/>
<polygon points="525.1,550.0 526.6,549.3 527.6,549.9 527.7,551.7 524.9,569.1 524.1,571.5 522.7,573.9 521.0,575.8 486.5,603.6 484.9,604.5 483.8,604.0 483.5,602.3 485.7,584.5 486.5,582.0 488.0,579.4 489.8,577.4" fill="#898888"/>
<polygon points="519.4,558.4 521.3,557.5 522.5,558.3 522.6,560.5 522.0,564.3 521.1,567.3 519.3,570.4 517.2,572.7 493.4,591.7 491.4,592.7 490.0,592.0 489.8,589.9 490.3,586.0 491.2,582.8 493.1,579.6 495.3,577.2" fill="#979695" opacity="0.7"/>
</g></g>
<g clip-path="url(#cL)">
<g filter="url(#stoneL)">
<polygon points="167.4,362.5 379.1,481.2 376.3,724.5 204.3,582.6" fill="#292a2e"/>
<polygon points="214.7,402.6 218.2,405.8 221.1,410.9 222.7,416.4 227.3,453.1 227.0,457.1 225.1,458.9 222.0,458.0 172.8,426.3 169.8,423.3 167.2,418.8 165.7,414.0 159.5,379.1 159.5,374.9 161.0,372.6 163.6,373.0" fill="#32343a"/>
<polygon points="210.4,400.1 213.9,403.3 216.8,408.4 218.3,413.8 222.3,444.4 222.0,448.4 220.1,450.3 217.1,449.5 171.8,420.6 168.8,417.6 166.2,413.1 164.7,408.2 159.5,379.1 159.5,374.9 161.0,372.6 163.6,373.0" fill="#858891"/>
<polygon points="212.7,408.2 215.5,410.8 217.8,414.9 219.0,419.2 222.6,446.2 222.3,449.5 220.8,451.0 218.4,450.3 173.2,421.5 170.8,419.1 168.7,415.5 167.5,411.6 163.0,385.7 162.9,382.4 164.2,380.6 166.3,381.0" fill="#4a4c53"/>
<polygon points="213.4,413.1 215.4,415.1 217.2,418.1 218.1,421.3 221.3,445.4 221.1,447.8 220.0,449.0 218.1,448.5 174.6,420.8 172.8,419.0 171.2,416.3 170.3,413.4 166.3,390.2 166.3,387.7 167.2,386.4 168.8,386.7" fill="#555860"/>
<polygon points="208.0,415.5 210.6,417.9 212.7,421.6 213.9,425.6 214.6,431.0 214.4,434.1 213.0,435.6 210.8,435.0 178.7,415.0 176.3,412.7 174.3,409.3 173.2,405.5 172.3,400.2 172.3,397.1 173.5,395.6 175.5,395.9" fill="#62656d" opacity="0.6"/>
<polygon points="324.0,465.8 328.4,469.8 331.8,475.6 333.1,481.6 334.4,520.9 333.4,525.1 330.4,526.7 326.4,525.3 237.7,468.1 234.2,464.8 231.4,459.9 230.0,454.7 225.4,418.0 225.7,413.6 227.7,411.4 231.0,412.0" fill="#32343a"/>
<polygon points="318.4,462.6 322.8,466.5 326.1,472.3 327.4,478.2 328.7,511.0 327.7,515.3 324.8,516.9 320.8,515.6 237.0,462.2 233.5,458.8 230.7,453.9 229.2,448.7 225.4,418.0 225.7,413.6 227.7,411.4 231.0,412.0" fill="#858891"/>
<polygon points="320.5,471.5 323.9,474.7 326.6,479.3 327.7,484.0 328.7,513.0 328.0,516.4 325.6,517.7 322.4,516.6 238.7,463.2 235.9,460.5 233.6,456.6 232.4,452.4 229.1,425.2 229.3,421.7 231.0,420.0 233.6,420.5" fill="#4a4c53"/>
<polygon points="320.7,476.8 323.3,479.2 325.2,482.6 326.1,486.1 327.0,512.0 326.5,514.5 324.8,515.5 322.3,514.7 240.5,462.7 238.4,460.6 236.6,457.7 235.8,454.5 232.9,430.2 233.1,427.6 234.3,426.3 236.3,426.7" fill="#54575f"/>
<polygon points="313.0,478.5 316.2,481.4 318.6,485.6 319.6,490.0 319.9,495.8 319.2,499.1 317.1,500.4 314.0,499.5 246.0,457.0 243.3,454.5 241.1,450.7 240.0,446.7 239.4,441.1 239.7,437.9 241.3,436.4 243.8,437.0" fill="#62656d" opacity="0.6"/>
<polygon points="427.2,525.5 432.6,530.2 436.3,536.7 437.4,543.2 434.5,584.4 432.8,588.6 428.7,589.9 423.5,588.0 346.6,538.3 342.2,534.3 339.0,528.7 337.8,523.1 336.6,483.7 337.7,479.0 340.9,477.0 345.4,478.2" fill="#32343a"/>
<polygon points="420.2,521.5 425.5,526.1 429.2,532.5 430.3,539.0 428.2,573.4 426.4,577.7 422.5,579.1 417.3,577.2 346.4,532.0 342.1,527.9 338.9,522.3 337.6,516.6 336.6,483.7 337.7,479.0 340.9,477.0 345.4,478.2" fill="#858891"/>
<polygon points="421.9,531.1 426.1,534.8 429.1,540.0 429.9,545.1 428.0,575.5 426.7,578.9 423.5,580.0 419.3,578.5 348.6,533.4 345.1,530.1 342.5,525.6 341.5,521.0 340.8,491.9 341.6,488.2 344.2,486.6 347.8,487.6" fill="#4a4c53"/>
<polygon points="421.6,536.7 424.7,539.5 426.9,543.3 427.6,547.1 426.0,574.2 424.9,576.7 422.6,577.6 419.4,576.4 351.2,533.1 348.6,530.6 346.6,527.2 345.8,523.8 345.3,497.7 346.0,495.0 347.9,493.8 350.6,494.6" fill="#595c64"/>
<polygon points="411.3,537.6 415.2,541.0 417.9,545.7 418.7,550.4 418.4,556.5 417.2,559.8 414.2,560.9 410.4,559.6 359.8,528.0 356.4,524.9 353.9,520.6 352.9,516.2 352.9,510.3 353.7,506.9 356.2,505.5 359.6,506.5" fill="#62656d" opacity="0.6"/>
<polygon points="272.6,494.1 276.3,497.7 279.3,502.9 280.6,508.1 283.5,542.1 282.9,545.7 280.6,547.0 277.2,545.7 196.2,488.4 193.2,485.3 190.7,481.0 189.3,476.4 184.0,444.4 184.1,440.6 185.7,438.8 188.4,439.5" fill="#32343a"/>
<polygon points="267.9,491.1 271.6,494.7 274.6,499.8 275.9,505.0 278.4,533.4 277.8,537.0 275.5,538.3 272.2,537.0 195.4,483.2 192.4,480.1 189.9,475.7 188.4,471.1 184.0,444.4 184.1,440.6 185.7,438.8 188.4,439.5" fill="#858891"/>
<polygon points="270.0,498.9 272.9,501.8 275.3,505.8 276.4,510.0 278.5,535.1 278.1,538.0 276.3,539.0 273.6,538.0 196.8,484.2 194.4,481.7 192.4,478.2 191.2,474.5 187.4,450.8 187.4,447.8 188.7,446.4 190.9,447.0" fill="#4a4c53"/>
<polygon points="270.4,503.5 272.6,505.6 274.3,508.6 275.2,511.7 277.1,534.1 276.8,536.3 275.4,537.1 273.4,536.3 198.3,483.7 196.4,481.9 194.9,479.2 194.1,476.5 190.7,455.2 190.7,453.0 191.7,452.0 193.3,452.4" fill="#53565e"/>
<polygon points="264.3,504.6 267.0,507.3 269.1,511.0 270.1,514.8 270.6,519.9 270.2,522.6 268.5,523.7 266.0,522.8 202.5,479.0 200.2,476.7 198.3,473.3 197.2,469.8 196.5,465.0 196.6,462.2 197.8,461.0 199.9,461.6" fill="#62656d" opacity="0.6"/>
<polygon points="363.9,553.4 368.4,557.6 371.7,563.3 372.9,568.9 372.7,604.4 371.5,608.0 368.3,609.0 364.1,607.2 294.1,557.7 290.4,554.0 287.6,549.0 286.3,544.1 283.6,510.0 284.2,506.1 286.7,504.5 290.3,505.6" fill="#32343a"/>
<polygon points="358.2,549.7 362.6,553.9 365.9,559.5 367.1,565.1 367.1,594.7 365.9,598.4 362.8,599.4 358.6,597.6 293.7,552.1 290.0,548.5 287.2,543.5 285.8,538.5 283.6,510.0 284.2,506.1 286.7,504.5 290.3,505.6" fill="#858891"/>
<polygon points="360.0,558.0 363.5,561.4 366.1,565.9 367.1,570.3 367.1,596.5 366.1,599.4 363.6,600.2 360.3,598.8 295.5,553.4 292.6,550.5 290.3,546.5 289.2,542.5 287.3,517.2 287.8,514.1 289.8,512.9 292.7,513.8" fill="#4a4c53"/>
<polygon points="360.0,562.8 362.6,565.3 364.6,568.7 365.3,571.9 365.3,595.3 364.7,597.5 362.8,598.1 360.3,597.1 297.6,553.2 295.4,551.0 293.6,548.0 292.8,545.0 291.2,522.4 291.6,520.1 293.1,519.2 295.3,519.9" fill="#575a62"/>
<polygon points="351.9,563.2 355.1,566.3 357.5,570.4 358.4,574.5 358.4,579.7 357.6,582.6 355.3,583.4 352.2,582.2 304.2,549.1 301.4,546.3 299.1,542.5 298.2,538.7 297.8,533.5 298.4,530.7 300.3,529.6 303.1,530.6" fill="#62656d" opacity="0.6"/>
<polygon points="222.7,510.1 225.9,513.3 228.5,517.8 229.9,522.4 233.8,552.3 233.6,555.4 231.8,556.5 229.0,555.3 203.9,536.1 201.0,533.1 198.6,528.9 197.3,524.7 192.5,495.5 192.6,492.1 194.1,490.6 196.7,491.6" fill="#32343a"/>
<polygon points="218.9,507.3 222.0,510.5 224.6,515.0 226.0,519.6 229.3,544.5 229.1,547.7 227.3,548.8 224.6,547.6 203.1,531.3 200.2,528.3 197.8,524.1 196.5,519.8 192.5,495.5 192.6,492.1 194.1,490.6 196.7,491.6" fill="#858891"/>
<polygon points="220.9,514.2 223.4,516.7 225.5,520.3 226.5,524.0 229.6,546.0 229.3,548.5 227.9,549.4 225.7,548.5 204.5,532.4 202.2,529.9 200.2,526.6 199.2,523.2 195.6,501.5 195.7,498.9 197.0,497.7 199.1,498.5" fill="#4a4c53"/>
<polygon points="221.5,518.1 223.3,520.1 224.9,522.7 225.7,525.5 228.4,545.1 228.2,547.0 227.2,547.7 225.5,547.0 205.9,532.1 204.2,530.3 202.7,527.8 201.9,525.2 198.8,505.9 198.9,503.9 199.8,503.1 201.4,503.6" fill="#565961"/>
<polygon points="216.6,519.0 218.9,521.4 220.8,524.7 221.8,528.0 222.4,532.5 222.2,534.9 220.9,535.8 218.9,535.0 210.1,528.4 207.9,526.1 206.0,522.8 205.0,519.6 204.3,515.2 204.4,512.7 205.7,511.7 207.7,512.5" fill="#62656d" opacity="0.6"/>
<polygon points="263.1,538.8 266.5,542.3 269.3,547.0 270.6,551.8 273.5,582.2 273.0,585.4 270.9,586.4 267.8,584.9 243.2,566.1 240.0,562.8 237.5,558.4 236.2,554.1 232.3,524.2 232.6,520.8 234.5,519.4 237.5,520.5" fill="#32343a"/>
<polygon points="258.8,535.7 262.2,539.2 264.9,543.9 266.2,548.6 268.8,574.0 268.3,577.2 266.2,578.3 263.2,576.9 242.6,561.2 239.4,558.0 236.9,553.5 235.6,549.1 232.3,524.2 232.6,520.8 234.5,519.4 237.5,520.5" fill="#858891"/>
<polygon points="260.7,542.8 263.5,545.6 265.7,549.3 266.7,553.1 268.9,575.6 268.6,578.1 266.9,578.9 264.4,577.8 244.1,562.4 241.6,559.7 239.5,556.2 238.5,552.7 235.6,530.6 235.9,527.9 237.4,526.8 239.8,527.7" fill="#4a4c53"/>
<polygon points="261.2,546.9 263.2,548.9 264.8,551.8 265.6,554.6 267.6,574.6 267.4,576.5 266.1,577.1 264.3,576.3 245.7,562.3 243.8,560.3 242.3,557.6 241.5,555.0 239.0,535.2 239.2,533.2 240.3,532.4 242.1,533.1" fill="#53565e"/>
<polygon points="255.6,547.4 258.1,550.0 260.1,553.5 261.0,556.9 261.5,561.4 261.2,563.9 259.7,564.7 257.4,563.7 250.8,558.8 248.3,556.3 246.4,552.9 245.4,549.5 244.9,545.0 245.1,542.5 246.6,541.6 248.9,542.5" fill="#62656d" opacity="0.6"/>
<polygon points="311.6,573.3 315.4,577.1 318.3,582.1 319.5,587.0 321.0,618.1 320.3,621.3 317.8,622.1 314.2,620.4 283.4,596.9 280.0,593.3 277.4,588.7 276.1,584.2 273.3,553.7 273.8,550.3 276.0,549.0 279.4,550.4" fill="#32343a"/>
<polygon points="306.7,569.8 310.5,573.6 313.4,578.6 314.6,583.5 316.0,609.5 315.3,612.6 312.8,613.5 309.3,611.8 283.0,591.9 279.6,588.4 276.9,583.7 275.7,579.2 273.3,553.7 273.8,550.3 276.0,549.0 279.4,550.4" fill="#858891"/>
<polygon points="308.6,577.2 311.6,580.2 313.9,584.2 314.9,588.1 316.1,611.0 315.5,613.6 313.5,614.3 310.7,612.9 284.7,593.2 281.9,590.3 279.8,586.6 278.8,583.0 276.7,560.4 277.2,557.7 279.0,556.7 281.6,557.8" fill="#4a4c53"/>
<polygon points="308.8,581.3 311.1,583.6 312.8,586.6 313.5,589.5 314.7,609.9 314.2,611.9 312.8,612.4 310.6,611.4 286.6,593.2 284.5,591.0 282.9,588.2 282.1,585.5 280.4,565.3 280.7,563.3 282.1,562.6 284.1,563.4" fill="#575a62"/>
<polygon points="302.3,581.5 305.0,584.2 307.2,587.9 308.1,591.5 308.4,596.1 307.8,598.6 306.0,599.3 303.4,598.1 292.5,590.0 289.9,587.3 287.9,583.7 286.9,580.2 286.5,575.7 287.0,573.2 288.7,572.3 291.3,573.4" fill="#62656d" opacity="0.6"/>
<polygon points="364.1,610.6 368.3,614.8 371.4,620.2 372.5,625.3 372.3,656.8 371.2,660.0 368.2,660.6 364.2,658.6 331.7,633.7 328.0,629.9 325.1,625.0 324.0,620.3 322.6,589.2 323.4,585.8 326.1,584.7 329.9,586.3" fill="#32343a"/>
<polygon points="358.7,606.8 362.8,610.9 365.9,616.2 367.0,621.3 367.0,647.7 366.0,650.8 363.0,651.5 359.0,649.5 331.5,628.7 327.8,624.8 324.9,619.9 323.7,615.2 322.6,589.2 323.4,585.8 326.1,584.7 329.9,586.3" fill="#858891"/>
<polygon points="360.4,614.4 363.7,617.7 366.2,621.9 367.0,625.9 367.0,649.3 366.2,651.8 363.8,652.3 360.6,650.7 333.4,630.1 330.4,627.0 328.1,623.1 327.2,619.3 326.2,596.3 326.9,593.5 329.0,592.7 332.1,594.0" fill="#4a4c53"/>
<polygon points="360.4,618.6 362.9,621.1 364.7,624.2 365.4,627.2 365.4,648.1 364.8,649.9 363.0,650.4 360.6,649.2 335.6,630.2 333.3,627.9 331.6,624.9 330.9,622.1 330.1,601.5 330.6,599.5 332.3,598.9 334.6,599.9" fill="#52555d"/>
<polygon points="352.7,618.2 355.8,621.3 358.0,625.2 358.9,628.9 358.9,633.6 358.1,636.0 355.9,636.6 353.0,635.1 342.8,627.5 339.9,624.6 337.7,620.8 336.8,617.2 336.7,612.5 337.4,610.0 339.4,609.3 342.3,610.7" fill="#62656d" opacity="0.6"/>
<polygon points="293.6,607.5 297.1,611.1 299.8,615.8 300.9,620.2 302.9,648.1 302.3,650.8 300.0,651.4 296.9,649.7 210.9,579.7 208.1,576.7 205.8,572.7 204.6,568.8 200.1,542.1 200.3,539.0 201.8,537.9 204.3,539.0" fill="#32343a"/>
<polygon points="289.2,604.1 292.6,607.7 295.3,612.3 296.5,616.8 298.3,640.0 297.7,642.8 295.5,643.5 292.3,641.8 210.2,575.4 207.4,572.3 205.1,568.3 203.8,564.4 200.1,542.1 200.3,539.0 201.8,537.9 204.3,539.0" fill="#858891"/>
<polygon points="291.0,610.7 293.7,613.6 295.9,617.3 296.8,620.9 298.4,641.4 297.9,643.7 296.1,644.2 293.6,642.8 211.5,576.4 209.3,574.0 207.4,570.8 206.4,567.6 203.2,547.8 203.3,545.4 204.5,544.6 206.6,545.5" fill="#4a4c53"/>
<polygon points="291.3,614.5 293.3,616.6 294.9,619.4 295.7,622.0 297.1,640.4 296.7,642.1 295.4,642.4 293.5,641.4 212.9,576.4 211.2,574.5 209.8,572.1 209.0,569.7 206.2,552.0 206.3,550.2 207.2,549.6 208.8,550.3" fill="#565961"/>
<polygon points="285.4,614.2 287.9,616.8 289.9,620.2 290.8,623.5 291.1,627.6 290.7,629.8 289.1,630.3 286.7,629.1 217.0,573.4 214.9,571.1 213.1,568.0 212.1,565.0 211.5,561.0 211.6,558.8 212.8,558.0 214.8,558.9" fill="#62656d" opacity="0.6"/>
<polygon points="364.2,661.7 368.2,665.8 371.2,670.8 372.2,675.5 372.1,703.8 371.0,706.5 368.2,706.8 364.4,704.6 312.7,662.6 309.3,659.0 306.7,654.4 305.6,650.2 303.7,622.3 304.4,619.3 306.7,618.5 310.2,620.2" fill="#32343a"/>
<polygon points="359.1,657.7 363.1,661.8 366.0,666.8 367.0,671.5 367.0,695.1 366.0,697.9 363.2,698.2 359.4,696.1 312.5,658.1 309.0,654.4 306.4,649.9 305.3,645.6 303.7,622.3 304.4,619.3 306.7,618.5 310.2,620.2" fill="#858891"/>
<polygon points="360.7,664.7 363.9,667.9 366.2,671.9 367.0,675.6 367.0,696.5 366.2,698.7 364.0,699.0 360.9,697.3 314.2,659.5 311.4,656.5 309.3,652.9 308.4,649.5 307.1,628.8 307.6,626.4 309.5,625.8 312.3,627.2" fill="#4a4c53"/>
<polygon points="360.7,668.5 363.1,670.9 364.8,673.9 365.5,676.6 365.5,695.3 364.9,697.0 363.2,697.2 360.9,695.9 316.1,659.7 314.0,657.5 312.5,654.7 311.8,652.2 310.7,633.8 311.1,632.0 312.5,631.5 314.6,632.6" fill="#53565e"/>
<polygon points="353.5,667.4 356.3,670.4 358.5,674.1 359.3,677.5 359.3,681.7 358.6,683.8 356.5,684.2 353.7,682.6 322.5,657.7 319.8,654.9 317.8,651.4 317.0,648.1 316.7,644.0 317.3,641.8 319.1,641.3 321.7,642.6" fill="#62656d" opacity="0.6"/>
</g></g>
<path d="M272.2 543.25L209.0 579.68" stroke="#ff5a36" stroke-width="1" fill="none"/><path d="M461.5 543.26L524.8 579.75" stroke="#4d9dff" stroke-width="1" fill="none"/><polygon points="367.0,469.2 349.5,478.8 349.5,497.9 367.0,489.5" fill="#cfe4ff" fill-opacity="0.55"/><polygon points="367.0,469.2 384.6,479.0 384.6,497.9 367.0,489.5" fill="#ffc2b4" fill-opacity="0.55"/><polygon points="367.0,489.5 351.2,499.6 367.0,510.0 382.8,499.6" fill="#a9bd83" fill-opacity="0.75"/><polyline points="367.0,469.2 349.5,478.8 349.5,497.9" fill="none" stroke="#4d9dff" stroke-width="1"/><polyline points="367.0,469.2 384.6,479.0 384.6,497.9" fill="none" stroke="#ff4d25" stroke-width="1"/><polyline points="351.2,499.6 367.0,510.0 382.8,499.6" fill="none" stroke="#b4ee55" stroke-width="1" stroke-dasharray="2.2 1"/><path d="M367.03999999999996 489.49000000000007L313.5 520.35" stroke="#ff4d25" stroke-width="2.5" fill="none"/><path d="M367.03999999999996 489.49000000000007L420.5 520.31" stroke="#4d9dff" stroke-width="2.5" fill="none"/><path d="M367.03999999999996 489.49000000000007V427" stroke="#a8ea4c" stroke-width="2.6" fill="none"/><path d="M367.03999999999996 389.2L354.93999999999994 422.4A12.1 5.8 0 0 0 379.14 422.4Z" fill="#a8e94d"/><path d="M367.03999999999996 389.2L354.93999999999994 422.4A12.1 5.8 0 0 0 367.03999999999996 428.2Z" fill="#aeec55"/><path d="M280.3 538.9L304.4 510.6C311 509.5 320.5 522 318.2 529.5Q317.6 532.6 314.6 533.6Z" fill="#c6411f"/><path d="M280.3 538.9L318.6 526.5Q318.6 531.8 314.6 533.6Z" fill="#d84c26"/><path d="M453.7799999999999 538.9L429.67999999999995 510.6C423.0799999999999 509.5 413.5799999999999 522 415.87999999999994 529.5Q416.4799999999999 532.6 419.4799999999999 533.6Z" fill="#3f7dc6"/><path d="M453.7799999999999 538.9L429.67999999999995 510.6Q425.0799999999999 510 421.0799999999999 514Z" fill="#4a8bd8"/>
<path d="M127.8 812.6V736" stroke="#3ad58a" stroke-width="1.6"/><path d="M127.8 812.6L66 848" stroke="#ff3d3d" stroke-width="1.6"/><path d="M127.8 812.6L189.6 848" stroke="#3d6dff" stroke-width="1.6"/><polygon points="127.8,763.8 180.9,782.7 171.2,838.0 127.8,874.2 84.7,838.0 75.0,782.7" fill="#ffffff" fill-opacity="0.42"/><path d="M127.8 739.5L123.9 752.2H131.7Z" fill="#3ad58a"/><path d="M64.2 849.4L74.6 838.9L78.7 845.6Z" fill="#ff3d3d"/><path d="M191.4 849.4L181 838.9L176.9 845.6Z" fill="#3d6dff"/><path d="M124 727.4L127.8 732.2L131.8 727.4M127.8 732.2V736.6" stroke="#3ad58a" stroke-width="1.2" fill="none"/><path d="M54.2 849.4L62 858.8M62 849.4L54.2 858.8" stroke="#ff3d3d" stroke-width="1.2" fill="none"/><path d="M194.6 849.8H201.6L194.6 858.4H202" stroke="#3d6dff" stroke-width="1.2" fill="none"/><text x="0" y="0" font-size="22" fill="#fff" font-family="'Liberation Sans','Noto Sans CJK SC',sans-serif" transform="matrix(0.87,0.49,0.06,1,95.7,828.8)">右</text><text x="0" y="0" font-size="22" fill="#fff" font-family="'Liberation Sans','Noto Sans CJK SC',sans-serif" transform="matrix(0.87,-0.49,-0.06,1,141.5,840.4)">前</text><text x="0" y="0" font-size="22" fill="#fff" font-family="'Liberation Sans','Noto Sans CJK SC',sans-serif" transform="matrix(0.87,-0.49,0.87,0.49,125.9,796.6)">上</text>
</svg>
<div id="t0" class="t" style="left:429.53px;top:26.6px;height:30px;line-height:30px;font-size:13px;color:#dcdcdc;letter-spacing:0.000px;transform:scaleX(0.9313);transform-origin:0 50%;">0.01</div>
<div id="t1" class="t" style="left:503.81px;top:26.6px;height:30px;line-height:30px;font-size:13px;color:#dcdcdc;letter-spacing:0.142px;">1°</div>
<div id="t2" class="t" style="left:562.51px;top:26.6px;height:30px;line-height:30px;font-size:13px;color:#dcdcdc;letter-spacing:0.000px;transform:scaleX(0.9393);transform-origin:0 50%;">5.00</div>
<div style="left:744px;top:33px;width:793px;height:880px;background:#292929"></div>
<div style="left:1537px;top:33px;width:10px;height:880px;background:#222"></div>
<div style="left:1536px;top:437px;width:10.4px;height:469px;background:#5c5c5c"></div>
<div style="left:744px;top:32.4px;width:786px;height:1.6px;background:#232323"></div>
<div style="left:744px;top:34px;width:786px;height:23px;background:#3a3a3a"></div>
<div style="left:744px;top:35.2px;width:2.2px;height:21.8px;background:#b8b8b8"></div>
<svg width="120" height="24" viewBox="744 33 120 24" style="position:absolute;left:744px;top:33px">
<path d="M751.2 42.9H760.8L756 49.9Z" fill="#8c8c8c"/>
<path d="M767.4 38.5H777.2L780.6 42V53.5H767.4Z" fill="#2e2e2e" stroke="#a6a6a6" stroke-width="1" stroke-linejoin="round"/>
<circle cx="773.9" cy="47" r="4.9" fill="#ef8a3c"/>
<path d="M773.9 47V42.1A4.9 4.9 0 0 1 778.8 47ZM773.9 47V51.9A4.9 4.9 0 0 1 769 47Z" fill="#2a2a2a"/>
<circle cx="773.9" cy="47" r="4.9" fill="none" stroke="#ef8a3c" stroke-width="0.8"/>
</svg>
<div id="t3" class="t" style="left:784.33px;top:32.7px;height:28px;line-height:28px;font-size:13px;color:#cdcdcd;letter-spacing:-0.188px;">Material_4(</div>
<div id="t4" class="t" style="left:872.12px;top:32.7px;height:28px;line-height:28px;font-size:13px;color:#cdcdcd;letter-spacing:0.000px;">)</div>
<div class="sep" style="top:84.85px"></div>
<div class="vs" style="left:1125.95px;top:57px;height:28px"></div>
<div class="vs" style="left:1509.0px;top:57px;height:28px"></div>
<div class="btn" style="left:1129px;top:61.6px;width:379px"></div>
<div id="t5" class="t" style="left:1144.53px;top:57.5px;height:28px;line-height:28px;font-size:13px;color:#dadada;letter-spacing:0.060px;">Engine/Default</div>
<svg width="16" height="16" viewBox="0 0 16 16" style="position:absolute;left:1490px;top:64.1px"><circle cx="8" cy="8" r="5.4" fill="none" stroke="#dcdcdc" stroke-width="1.2"/><circle cx="8" cy="8" r="2.1" fill="#dcdcdc"/></svg>
<div class="sep" style="top:112.85px"></div>
<div class="sep" style="top:140.85px"></div>
<div class="vs" style="left:1125.95px;top:113px;height:28px"></div>
<div class="vs" style="left:1509.0px;top:113px;height:28px"></div>
<div class="inp" style="left:1129.4px;top:118px;width:377.4px"></div>
<div id="t6" class="t" style="left:1131.75px;top:114.5px;height:28px;line-height:28px;font-size:13px;color:#dadada;letter-spacing:-0.019px;">2000</div>
<div class="sep" style="top:168.85px"></div>
<div class="sep" style="top:196.85px"></div>
<div id="t7" class="t" style="left:791.64px;top:170.5px;height:28px;line-height:28px;font-size:13px;color:#cacaca;letter-spacing:0.000px;transform:scaleX(0.8592);transform-origin:0 50%;">USE_ALPHA_CLIP</div>
<div class="vs" style="left:1125.95px;top:169px;height:28px"></div>
<div class="vs" style="left:1509.0px;top:169px;height:28px"></div>
<div class="cb" style="top:176.1px"></div>
<div class="sep" style="top:224.85px"></div>
<div id="t8" class="t" style="left:791.60px;top:198.5px;height:28px;line-height:28px;font-size:13px;color:#cacaca;letter-spacing:0.000px;transform:scaleX(0.8948);transform-origin:0 50%;">USE_NORMAL_TEX</div>
<div class="vs" style="left:1125.95px;top:197px;height:28px"></div>
<div class="vs" style="left:1509.0px;top:197px;height:28px"></div>
<div class="cb" style="top:204.1px"></div>
<svg width="16" height="16" viewBox="0 0 16 16" style="position:absolute;left:1129.1px;top:204.1px"><path d="M3.1 8.3L6.3 11.2L12.8 4.6" fill="none" stroke="#f5a623" stroke-width="2.1"/></svg>
<div class="sep" style="top:252.85px"></div>
<div id="t9" class="t" style="left:791.60px;top:226.5px;height:28px;line-height:28px;font-size:13px;color:#cacaca;letter-spacing:0.000px;transform:scaleX(0.8947);transform-origin:0 50%;">USE_EMISSION_TEX</div>
<div class="vs" style="left:1125.95px;top:225px;height:28px"></div>
<div class="vs" style="left:1509.0px;top:225px;height:28px"></div>
<div class="cb" style="top:232.1px"></div>
<div class="sep" style="top:280.85px"></div>
<div id="t10" class="t" style="left:791.54px;top:254.5px;height:28px;line-height:28px;font-size:13px;color:#cacaca;letter-spacing:0.000px;transform:scaleX(0.9047);transform-origin:0 50%;">BAKED_RENDER_WITH_DYNAMIC_DIRECTIONAL_LIGHT</div>
<div class="vs" style="left:1125.95px;top:253px;height:28px"></div>
<div class="vs" style="left:1509.0px;top:253px;height:28px"></div>
<div class="cb" style="top:260.1px"></div>
<div class="sep" style="top:308.85px"></div>
<div id="t11" class="t" style="left:791.53px;top:282.5px;height:28px;line-height:28px;font-size:13px;color:#cacaca;letter-spacing:0.000px;transform:scaleX(0.9108);transform-origin:0 50%;">BAKED_RENDER_WITH_DYNAMIC_SHADOW</div>
<div class="vs" style="left:1125.95px;top:281px;height:28px"></div>
<div class="vs" style="left:1509.0px;top:281px;height:28px"></div>
<div class="cb" style="top:288.1px"></div>
<div class="sep" style="top:336.85px"></div>
<div class="sep" style="top:364.85px"></div>
<div id="t12" class="t" style="left:792.69px;top:338.5px;height:28px;line-height:28px;font-size:13px;color:#cacaca;letter-spacing:0.000px;transform:scaleX(0.9416);transform-origin:0 50%;">_MainTex</div>
<div class="sep" style="top:392.85px"></div>
<div id="t13" class="t" style="left:816.41px;top:366.5px;height:28px;line-height:28px;font-size:13px;color:#cacaca;letter-spacing:-0.250px;">Texture</div>
<div class="vs" style="left:1125.95px;top:365px;height:28px"></div>
<div class="vs" style="left:1509.0px;top:365px;height:28px"></div>
<div class="btn" style="left:1129px;top:369.6px;width:379px"></div>
<div id="t14" class="t" style="left:1145.24px;top:365.5px;height:28px;line-height:28px;font-size:13px;color:#dadada;letter-spacing:-0.024px;">stone_brick</div>
<svg width="16" height="16" viewBox="0 0 16 16" style="position:absolute;left:1490px;top:372.1px"><circle cx="8" cy="8" r="5.4" fill="none" stroke="#dcdcdc" stroke-width="1.2"/><circle cx="8" cy="8" r="2.1" fill="#dcdcdc"/></svg>
<div class="sep" style="top:420.85px"></div>
<div id="t15" class="t" style="left:816.41px;top:394.5px;height:28px;line-height:28px;font-size:13px;color:#cacaca;letter-spacing:-0.067px;">Tiling</div>
<div class="vs" style="left:1125.95px;top:393px;height:28px"></div>
<div class="vs" style="left:1509.0px;top:393px;height:28px"></div>
<div id="t16" class="t" style="left:1132.02px;top:394.5px;height:28px;line-height:28px;font-size:12.4px;color:#e03c3c;letter-spacing:0.000px;">X</div>
<div class="inp" style="left:1145.4px;top:398px;width:170.4px"></div>
<div id="t17" class="t" style="left:1147.61px;top:394.5px;height:28px;line-height:28px;font-size:13px;color:#dadada;letter-spacing:-0.135px;">1.00</div>
<div id="t18" class="t" style="left:1322.93px;top:394.5px;height:28px;line-height:28px;font-size:12.4px;color:#4fbf4f;letter-spacing:0.000px;">Y</div>
<div class="inp" style="left:1336.2px;top:398px;width:170.4px"></div>
<div id="t19" class="t" style="left:1338.51px;top:394.5px;height:28px;line-height:28px;font-size:13px;color:#dadada;letter-spacing:-0.135px;">1.00</div>
<div class="sep" style="top:448.85px"></div>
<div id="t20" class="t" style="left:816.08px;top:422.5px;height:28px;line-height:28px;font-size:13px;color:#cacaca;letter-spacing:0.067px;">Offset</div>
<div class="vs" style="left:1125.95px;top:421px;height:28px"></div>
<div class="vs" style="left:1509.0px;top:421px;height:28px"></div>
<div id="t21" class="t" style="left:1132.02px;top:422.5px;height:28px;line-height:28px;font-size:12.4px;color:#e03c3c;letter-spacing:0.000px;">X</div>
<div class="inp" style="left:1145.4px;top:426px;width:170.4px"></div>
<div id="t22" class="t" style="left:1148.09px;top:422.5px;height:28px;line-height:28px;font-size:13px;color:#dadada;letter-spacing:-0.295px;">0.00</div>
<div id="t23" class="t" style="left:1322.93px;top:422.5px;height:28px;line-height:28px;font-size:12.4px;color:#4fbf4f;letter-spacing:0.000px;">Y</div>
<div class="inp" style="left:1336.2px;top:426px;width:170.4px"></div>
<div id="t24" class="t" style="left:1338.99px;top:422.5px;height:28px;line-height:28px;font-size:13px;color:#dadada;letter-spacing:-0.295px;">0.00</div>
<div class="sep" style="top:476.85px"></div>
<div id="t25" class="t" style="left:792.70px;top:450.5px;height:28px;line-height:28px;font-size:13px;color:#cacaca;letter-spacing:-0.435px;">_Color</div>
<div class="vs" style="left:1125.95px;top:449px;height:28px"></div>
<div class="vs" style="left:1509.0px;top:449px;height:28px"></div>
<div style="left:1129px;top:454px;width:379px;height:20px;background:#ffffff"></div>
<div class="sep" style="top:504.85px"></div>
<div id="t26" class="t" style="left:792.70px;top:478.5px;height:28px;line-height:28px;font-size:13px;color:#cacaca;letter-spacing:-0.231px;">_Metallic</div>
<div class="vs" style="left:1125.95px;top:477px;height:28px"></div>
<div class="vs" style="left:1509.0px;top:477px;height:28px"></div>
<div class="trk" style="top:490.2px"></div>
<div class="thm" style="left:1129.0px;top:486.4px"></div>
<div class="inp" style="left:1384.2px;top:482px;width:122.4px"></div>
<div id="t27" class="t" style="left:1386.89px;top:478.5px;height:28px;line-height:28px;font-size:13px;color:#dadada;letter-spacing:-0.295px;">0.00</div>
<div class="sep" style="top:532.85px"></div>
<div id="t28" class="t" style="left:792.70px;top:506.5px;height:28px;line-height:28px;font-size:13px;color:#cacaca;letter-spacing:-0.412px;">_Smoothness</div>
<div class="vs" style="left:1125.95px;top:505px;height:28px"></div>
<div class="vs" style="left:1509.0px;top:505px;height:28px"></div>
<div class="trk" style="top:518.2px"></div>
<div class="fil" style="top:518.2px;width:125.2px"></div>
<div class="thm" style="left:1252.1px;top:514.4px"></div>
<div class="inp" style="left:1384.2px;top:510px;width:122.4px"></div>
<div id="t29" class="t" style="left:1386.89px;top:506.5px;height:28px;line-height:28px;font-size:13px;color:#dadada;letter-spacing:-0.295px;">0.50</div>
<div class="sep" style="top:560.85px"></div>
<div id="t30" class="t" style="left:792.70px;top:534.5px;height:28px;line-height:28px;font-size:13px;color:#cacaca;letter-spacing:-0.118px;">_AlphaThreadHold</div>
<div class="vs" style="left:1125.95px;top:533px;height:28px"></div>
<div class="vs" style="left:1509.0px;top:533px;height:28px"></div>
<div class="trk" style="top:546.2px"></div>
<div class="fil" style="top:546.2px;width:125.2px"></div>
<div class="thm" style="left:1252.1px;top:542.4px"></div>
<div class="inp" style="left:1384.2px;top:538px;width:122.4px"></div>
<div id="t31" class="t" style="left:1386.89px;top:534.5px;height:28px;line-height:28px;font-size:13px;color:#dadada;letter-spacing:-0.295px;">0.50</div>
<div class="sep" style="top:588.85px"></div>
<div id="t32" class="t" style="left:792.70px;top:562.5px;height:28px;line-height:28px;font-size:13px;color:#cacaca;letter-spacing:-0.261px;">_NormalTex</div>
<div class="sep" style="top:616.85px"></div>
<div id="t33" class="t" style="left:816.41px;top:590.5px;height:28px;line-height:28px;font-size:13px;color:#cacaca;letter-spacing:-0.250px;">Texture</div>
<div class="vs" style="left:1125.95px;top:589px;height:28px"></div>
<div class="vs" style="left:1509.0px;top:589px;height:28px"></div>
<div class="btn" style="left:1129px;top:593.6px;width:379px"></div>
<div id="t34" class="t" style="left:1145.24px;top:589.5px;height:28px;line-height:28px;font-size:13px;color:#dadada;letter-spacing:-0.060px;">stone_brick_normal</div>
<svg width="16" height="16" viewBox="0 0 16 16" style="position:absolute;left:1490px;top:596.1px"><circle cx="8" cy="8" r="5.4" fill="none" stroke="#dcdcdc" stroke-width="1.2"/><circle cx="8" cy="8" r="2.1" fill="#dcdcdc"/></svg>
<div class="sep" style="top:644.85px"></div>
<div id="t35" class="t" style="left:816.41px;top:618.5px;height:28px;line-height:28px;font-size:13px;color:#cacaca;letter-spacing:-0.067px;">Tiling</div>
<div class="vs" style="left:1125.95px;top:617px;height:28px"></div>
<div class="vs" style="left:1509.0px;top:617px;height:28px"></div>
<div id="t36" class="t" style="left:1132.02px;top:618.5px;height:28px;line-height:28px;font-size:12.4px;color:#e03c3c;letter-spacing:0.000px;">X</div>
<div class="inp" style="left:1145.4px;top:622px;width:170.4px"></div>
<div id="t37" class="t" style="left:1147.61px;top:618.5px;height:28px;line-height:28px;font-size:13px;color:#dadada;letter-spacing:-0.135px;">1.00</div>
<div id="t38" class="t" style="left:1322.93px;top:618.5px;height:28px;line-height:28px;font-size:12.4px;color:#4fbf4f;letter-spacing:0.000px;">Y</div>
<div class="inp" style="left:1336.2px;top:622px;width:170.4px"></div>
<div id="t39" class="t" style="left:1338.51px;top:618.5px;height:28px;line-height:28px;font-size:13px;color:#dadada;letter-spacing:-0.135px;">1.00</div>
<div class="sep" style="top:672.85px"></div>
<div id="t40" class="t" style="left:816.08px;top:646.5px;height:28px;line-height:28px;font-size:13px;color:#cacaca;letter-spacing:0.067px;">Offset</div>
<div class="vs" style="left:1125.95px;top:645px;height:28px"></div>
<div class="vs" style="left:1509.0px;top:645px;height:28px"></div>
<div id="t41" class="t" style="left:1132.02px;top:646.5px;height:28px;line-height:28px;font-size:12.4px;color:#e03c3c;letter-spacing:0.000px;">X</div>
<div class="inp" style="left:1145.4px;top:650px;width:170.4px"></div>
<div id="t42" class="t" style="left:1148.09px;top:646.5px;height:28px;line-height:28px;font-size:13px;color:#dadada;letter-spacing:-0.295px;">0.00</div>
<div id="t43" class="t" style="left:1322.93px;top:646.5px;height:28px;line-height:28px;font-size:12.4px;color:#4fbf4f;letter-spacing:0.000px;">Y</div>
<div class="inp" style="left:1336.2px;top:650px;width:170.4px"></div>
<div id="t44" class="t" style="left:1338.99px;top:646.5px;height:28px;line-height:28px;font-size:13px;color:#dadada;letter-spacing:-0.295px;">0.00</div>
<div class="sep" style="top:700.85px"></div>
<div id="t45" class="t" style="left:792.70px;top:674.5px;height:28px;line-height:28px;font-size:13px;color:#cacaca;letter-spacing:-0.023px;">_NormalStrength</div>
<div class="vs" style="left:1125.95px;top:673px;height:28px"></div>
<div class="vs" style="left:1509.0px;top:673px;height:28px"></div>
<div class="trk" style="top:686.2px"></div>
<div class="fil" style="top:686.2px;width:149.2px"></div>
<div class="thm" style="left:1276.1px;top:682.4px"></div>
<div class="inp" style="left:1384.2px;top:678px;width:122.4px"></div>
<div id="t46" class="t" style="left:1386.41px;top:674.5px;height:28px;line-height:28px;font-size:13px;color:#dadada;letter-spacing:-0.135px;">1.00</div>
<div class="sep" style="top:728.85px"></div>
<div id="t47" class="t" style="left:792.68px;top:702.5px;height:28px;line-height:28px;font-size:13px;color:#cacaca;letter-spacing:0.000px;transform:scaleX(0.9078);transform-origin:0 50%;">_EmissiveTex</div>
<div class="sep" style="top:756.85px"></div>
<div id="t48" class="t" style="left:816.41px;top:730.5px;height:28px;line-height:28px;font-size:13px;color:#cacaca;letter-spacing:-0.250px;">Texture</div>
<div class="vs" style="left:1125.95px;top:729px;height:28px"></div>
<div class="vs" style="left:1509.0px;top:729px;height:28px"></div>
<div class="btn" style="left:1129px;top:733.6px;width:379px"></div>
<div id="t49" class="t" style="left:1144.46px;top:729.5px;height:28px;line-height:28px;font-size:13px;color:#dadada;letter-spacing:0.000px;transform:scaleX(1.0668);transform-origin:0 50%;">None</div>
<svg width="16" height="16" viewBox="0 0 16 16" style="position:absolute;left:1490px;top:736.1px"><circle cx="8" cy="8" r="5.4" fill="none" stroke="#dcdcdc" stroke-width="1.2"/><circle cx="8" cy="8" r="2.1" fill="#dcdcdc"/></svg>
<div class="sep" style="top:784.85px"></div>
<div id="t50" class="t" style="left:816.41px;top:758.5px;height:28px;line-height:28px;font-size:13px;color:#cacaca;letter-spacing:-0.067px;">Tiling</div>
<div class="vs" style="left:1125.95px;top:757px;height:28px"></div>
<div class="vs" style="left:1509.0px;top:757px;height:28px"></div>
<div id="t51" class="t" style="left:1132.02px;top:758.5px;height:28px;line-height:28px;font-size:12.4px;color:#e03c3c;letter-spacing:0.000px;">X</div>
<div class="inp" style="left:1145.4px;top:762px;width:170.4px"></div>
<div id="t52" class="t" style="left:1147.61px;top:758.5px;height:28px;line-height:28px;font-size:13px;color:#dadada;letter-spacing:-0.135px;">1.00</div>
<div id="t53" class="t" style="left:1322.93px;top:758.5px;height:28px;line-height:28px;font-size:12.4px;color:#4fbf4f;letter-spacing:0.000px;">Y</div>
<div class="inp" style="left:1336.2px;top:762px;width:170.4px"></div>
<div id="t54" class="t" style="left:1338.51px;top:758.5px;height:28px;line-height:28px;font-size:13px;color:#dadada;letter-spacing:-0.135px;">1.00</div>
<div class="sep" style="top:812.85px"></div>
<div id="t55" class="t" style="left:816.08px;top:786.5px;height:28px;line-height:28px;font-size:13px;color:#cacaca;letter-spacing:0.067px;">Offset</div>
<div class="vs" style="left:1125.95px;top:785px;height:28px"></div>
<div class="vs" style="left:1509.0px;top:785px;height:28px"></div>
<div id="t56" class="t" style="left:1132.02px;top:786.5px;height:28px;line-height:28px;font-size:12.4px;color:#e03c3c;letter-spacing:0.000px;">X</div>
<div class="inp" style="left:1145.4px;top:790px;width:170.4px"></div>
<div id="t57" class="t" style="left:1148.09px;top:786.5px;height:28px;line-height:28px;font-size:13px;color:#dadada;letter-spacing:-0.295px;">0.00</div>
<div id="t58" class="t" style="left:1322.93px;top:786.5px;height:28px;line-height:28px;font-size:12.4px;color:#4fbf4f;letter-spacing:0.000px;">Y</div>
<div class="inp" style="left:1336.2px;top:790px;width:170.4px"></div>
<div id="t59" class="t" style="left:1338.99px;top:786.5px;height:28px;line-height:28px;font-size:13px;color:#dadada;letter-spacing:-0.295px;">0.00</div>
<div class="sep" style="top:840.85px"></div>
<div id="t60" class="t" style="left:792.70px;top:814.5px;height:28px;line-height:28px;font-size:13px;color:#cacaca;letter-spacing:-0.399px;">_EmissiveColor</div>
<div class="vs" style="left:1125.95px;top:813px;height:28px"></div>
<div class="vs" style="left:1509.0px;top:813px;height:28px"></div>
<div style="left:1129px;top:818px;width:379px;height:20px;background:#000000"></div>
<div class="sep" style="top:868.85px"></div>
<div id="t61" class="t" style="left:792.70px;top:842.5px;height:28px;line-height:28px;font-size:13px;color:#cacaca;letter-spacing:-0.340px;">_EmissiveStrength</div>
<div class="vs" style="left:1125.95px;top:841px;height:28px"></div>
<div class="vs" style="left:1509.0px;top:841px;height:28px"></div>
<div class="trk" style="top:854.2px"></div>
<div class="fil" style="top:854.2px;width:51.1px"></div>
<div class="thm" style="left:1177.9px;top:850.4px"></div>
<div class="inp" style="left:1384.2px;top:846px;width:122.4px"></div>
<div id="t62" class="t" style="left:1386.41px;top:842.5px;height:28px;line-height:28px;font-size:13px;color:#dadada;letter-spacing:-0.135px;">1.00</div>
<div class="btn" style="left:823px;top:886px;width:633px;height:23.8px;border-radius:4px"></div>
<div id="t63" class="t" style="left:1090.97px;top:885.4px;height:28px;line-height:28px;font-size:13px;color:#d6d6d6;letter-spacing:0.206px;">Add Component</div>
<svg width="1555" height="921" viewBox="0 0 1555 921" style="position:absolute;left:0;top:0;pointer-events:none;font-family:'Liberation Sans','Noto Sans CJK SC',sans-serif;font-size:12px"><text x="848" y="52" fill="#cdcdcd">材质</text><text x="768" y="77" fill="#d2d2d2">着色器</text><text x="768" y="105" fill="#d2d2d2">标签</text><text x="792.5" y="133" fill="#d2d2d2">渲染队列</text><text x="768" y="161" fill="#d2d2d2">关键字</text><text x="768" y="329" fill="#d2d2d2">属性</text></svg>
<div style="left:736px;top:24.6px;width:801.2px;height:851.4px;border:solid #ff8327;border-width:7.7px 7.2px 7.5px 7.2px;border-radius:5px"></div>
<svg width="1555" height="58" viewBox="0 0 1555 58" style="position:absolute;left:0;top:0;font-family:'Liberation Sans','Noto Sans CJK SC',sans-serif;font-size:12px"><text x="8" y="17.2" fill="#e6e6e6">场景</text><text x="744" y="17.2" fill="#e6e6e6">检查器</text><path d="M678.8 10.2H685.1999999999999L682.0 15.2Z" fill="#9c9c9c"/><rect x="700.2" y="9.2" width="5.2" height="4.6" rx="1" fill="none" stroke="#929292" stroke-width="1.1"/><rect x="698.6" y="11.4" width="5.2" height="4.8" rx="1" fill="#2a2a2a" stroke="#929292" stroke-width="1.1"/><path d="M718.3 9.4L725.9 16.8M725.9 9.4L718.3 16.8" stroke="#ababab" stroke-width="0.9" fill="none"/><path d="M1499.8 10.2H1506.2L1503.0 15.2Z" fill="#9c9c9c"/><rect x="1521.2" y="9.2" width="5.2" height="4.6" rx="1" fill="none" stroke="#929292" stroke-width="1.1"/><rect x="1519.6" y="11.4" width="5.2" height="4.8" rx="1" fill="#2a2a2a" stroke="#929292" stroke-width="1.1"/><path d="M1539.2 9.4L1546.8 16.8M1546.8 9.4L1539.2 16.8" stroke="#ababab" stroke-width="0.9" fill="none"/><path d="M27.48 42.43L26.42 44.99L24.87 44.42L23.62 45.67L24.19 47.22L21.63 48.28L20.94 46.78L19.16 46.78L18.47 48.28L15.91 47.22L16.48 45.67L15.23 44.42L13.68 44.99L12.62 42.43L14.12 41.74L14.12 39.96L12.62 39.27L13.68 36.71L15.23 37.28L16.48 36.03L15.91 34.48L18.47 33.42L19.16 34.92L20.94 34.92L21.63 33.42L24.19 34.48L23.62 36.03L24.87 37.28L26.42 36.71L27.48 39.27L25.98 39.96L25.98 41.74ZM23.35 40.85A3.3 3.3 0 1 0 16.75 40.85A3.3 3.3 0 1 0 23.35 40.85Z" fill="#cccccc" fill-rule="evenodd" stroke="#cccccc" stroke-width="0.9" stroke-linejoin="round"/><path d="M39.9 40.2C43 34.8 47 33.2 49 33.2C52.5 33.2 55.2 36.5 56.3 40.4C55 44 52 46.9 48.2 46.9C44.5 46.9 41.5 43.6 39.9 40.2Z" fill="#cccccc"/><circle cx="48" cy="40" r="3.6" fill="#cccccc" stroke="#333" stroke-width="1.3"/><path d="M48.6 43.2H57L52.7 49Z" fill="#cccccc" stroke="#333" stroke-width="1.2" stroke-linejoin="miter"/><text x="67" y="45.8" fill="#e0e0e0">透视</text><path d="M96.3 39.4L100.05 43.8L103.8 39.4" fill="none" stroke="#cccccc" stroke-width="1.5" stroke-linecap="round" stroke-linejoin="round"/><rect x="276.6" y="31.4" width="23" height="19.4" rx="3.5" fill="#222" stroke="#f0a020" stroke-width="1.2"/><path d="M296.20 41.00L292.30 37.10L292.30 44.90ZM288.10 49.10L292.00 45.20L284.20 45.20ZM280.00 41.00L283.90 44.90L283.90 37.10ZM288.10 32.90L284.20 36.80L292.00 36.80Z" fill="#cccccc"/><path d="M283.1 41.0H293.1M288.1 36.0V46.0" stroke="#cccccc" stroke-width="2.5"/><path d="M311.60 38.31A6.7 6.7 0 1 1 313.59 45.73" fill="none" stroke="#cccccc" stroke-width="1.8"/><path d="M309.8 41.9L316.2 43.5L310.9 49.2Z" fill="#cccccc"/><path d="M317.9 37.6L320.9 40.6L317.9 43.6L314.9 40.6Z" fill="#cccccc"/><path d="M342.6 40V35.6Q342.6 33.9 344.3 33.9H353.3Q355 33.9 355 35.6V44.6Q355 46.3 353.3 46.3H349" fill="none" stroke="#cccccc" stroke-width="1.8"/><rect x="340.8" y="42.2" width="5.8" height="5.8" fill="#cccccc"/><path d="M346.8 38.2H350.8V42.2" fill="none" stroke="#cccccc" stroke-width="1.7"/><rect x="370.2" y="34.0" width="4.1" height="4.1" fill="#cccccc"/><rect x="380.6" y="34.0" width="4.1" height="4.1" fill="#cccccc"/><rect x="369.8" y="44.2" width="4.1" height="4.1" fill="#cccccc"/><rect x="381.6" y="44.2" width="4.1" height="4.1" fill="#cccccc"/><path d="M375.6 36H379.4M375.2 46.2H380.4M372.4 39.2L371.9 43.2M382.7 39.2L383.5 43.2" stroke="#cccccc" stroke-width="1.7" fill="none"/><rect x="396.4" y="31" width="1" height="20.5" fill="#262626"/><rect x="613" y="31" width="1" height="20.5" fill="#262626"/><path d="M407 38L411.2 34V36.9H419V34L423.2 38L419 42V39.1H411.2V42Z" fill="#cccccc"/><path d="M407.6 44V47.5H422.6V44M411.4 45V47.5M415.1 45V47.5M418.8 45V47.5" fill="none" stroke="#cccccc" stroke-width="1.1"/><path d="M459 39.4L463.1 43.8L467.2 39.4" fill="none" stroke="#cccccc" stroke-width="1.5" stroke-linecap="round" stroke-linejoin="round"/><path d="M490.6 34.6L482.6 46.9H496.3" fill="none" stroke="#cccccc" stroke-width="1.9" stroke-linejoin="miter"/><path d="M487.6 40.6Q491.8 42.4 492.8 46.6" fill="none" stroke="#cccccc" stroke-width="1.2"/><path d="M520.8 39.4L525.0 43.8L529.2 39.4" fill="none" stroke="#cccccc" stroke-width="1.5" stroke-linecap="round" stroke-linejoin="round"/><rect x="544" y="38.6" width="12.2" height="8.6" rx="1.6" fill="#cccccc"/><path d="M555.5 42.8L559.9 38.8V47.2Z" fill="#cccccc"/><path d="M547.2 36.6Q547.4 34.4 550 34.4H551.6Q553.6 34.4 553.6 36.4V38.8" fill="none" stroke="#cccccc" stroke-width="1.4"/><path d="M591 39.4L595.1 43.8L599.2 39.4" fill="none" stroke="#cccccc" stroke-width="1.5" stroke-linecap="round" stroke-linejoin="round"/><rect x="624" y="33.2" width="2.2" height="2.2" fill="#cccccc"/><rect x="629" y="33.2" width="2.2" height="2.2" fill="#cccccc"/><rect x="624" y="38.2" width="2.2" height="2.2" fill="#cccccc"/><path d="M628.6 48V41.6A4.15 4.15 0 0 1 636.9 41.6V48" fill="none" stroke="#cccccc" stroke-width="3"/><path d="M628.6 45.4V47.2M636.9 45.4V47.2" stroke="#333" stroke-width="0.9"/><path d="M656 39.4L660.0 43.8L664 39.4" fill="none" stroke="#cccccc" stroke-width="1.5" stroke-linecap="round" stroke-linejoin="round"/><path d="M686 33.7L692.4 37.4V44.800000000000004L686 48.5L679.6 44.800000000000004V37.4ZM679.6 37.4L686 41.1L692.4 37.4M686 41.1V48.5" fill="none" stroke="#cccccc" stroke-width="1.4" stroke-linejoin="round"/><path d="M707.6 40.6V36Q707.6 34.4 709.2 34.4H718.6Q720.2 34.4 720.2 36V45.8Q720.2 47.4 718.6 47.4H714.2" fill="none" stroke="#cccccc" stroke-width="1.5"/><path d="M707 43.4L711.6 48M711.6 43.4L707 48" stroke="#cccccc" stroke-width="1.5" fill="none"/></svg>
</body></html>
